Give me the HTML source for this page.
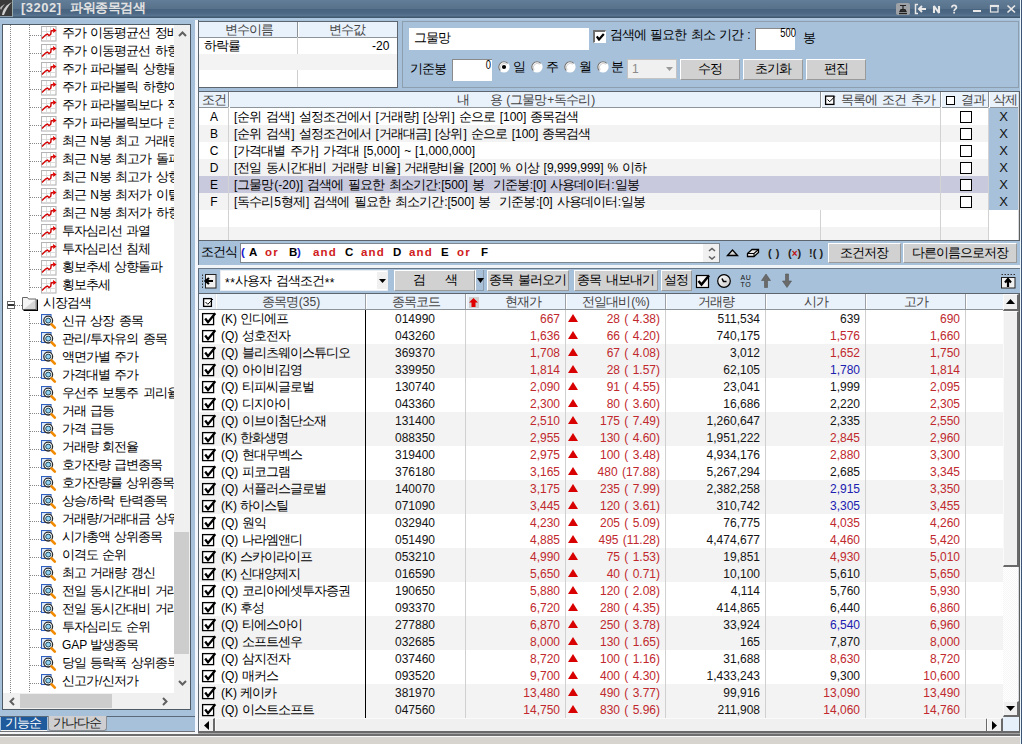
<!DOCTYPE html><html><head><meta charset="utf-8"><style>
*{box-sizing:border-box}
body{margin:0;width:1022px;height:744px;overflow:hidden;position:relative;background:#a7c1da;font-family:"Liberation Sans",sans-serif;font-size:12px;color:#000}
.ab{position:absolute}
.t{position:absolute;white-space:nowrap;line-height:14px}
.k{display:inline-block;font-size:13px;letter-spacing:-1px;margin-right:1px;vertical-align:top;line-height:14px}
</style></head><body>
<div class="ab" style="left:0;top:0;width:1020px;height:18px;background:linear-gradient(#627d97 0px,#57718b 9px,#48637f 9px,#4b6783 13px,#5a7591 16px,#3f5870 17px)"></div>
<div class="ab" style="left:0;top:0;width:13px;height:17px;background:#3a3a3a;border-right:1px solid #9aa;border-bottom:1px solid #8a9aa8"></div>
<svg class="ab" style="left:0;top:0" width="13" height="17"><path d="M2 15 C3 9 6 5 12 2 C8 6 6 10 4 15 Z" fill="#cfcfcf"/><path d="M0 8 C1 6 3 5 5 4 C3 6 2 8 1 10Z" fill="#bbb"/></svg>
<div class="t" style="left:21px;top:1px;font-size:13px;font-weight:bold;color:#e2e2e2;letter-spacing:0.5px">[3202]</div><div class="t" style="left:70px;top:1px;font-size:13px;font-weight:bold;color:#e2e2e2;letter-spacing:-0.5px">파워종목검색</div>
<div class="ab" style="left:896px;top:3px;width:14px;height:12px;background:#9ea2a6;border-radius:2px"></div>
<svg class="ab" style="left:896px;top:3px" width="14" height="12"><path d="M4 2.5h6M7 2.5v4M4 8.5L5 6.5h4L10 8.5Z" stroke="#222" stroke-width="1.2" fill="#333"/><path d="M3 10.5h8" stroke="#222" stroke-width="1.4"/></svg>
<svg class="ab" style="left:914px;top:3px" width="50" height="13"><path d="M4 1.5H1.5v9H4" stroke="#e8e8e8" stroke-width="1.5" fill="none"/><path d="M5 6h7M8 3L5 6L8 9" stroke="#e8e8e8" stroke-width="2" fill="none"/><path d="M20 10V3l5 7V3" stroke="#e8e8e8" stroke-width="2.1" fill="none" stroke-linejoin="bevel"/><path d="M37.8 4.5c0-1.5 1-2.2 2.3-2.2s2.3 0.8 2.3 2.2c0 1.6-2.3 1.8-2.3 3.5M40.1 8.8v1.6" stroke="#e8e8e8" stroke-width="1.7" fill="none"/></svg>
<svg class="ab" style="left:970px;top:3px" width="50" height="13"><path d="M3 8h8" stroke="#e8e8e8" stroke-width="2"/><rect x="20.5" y="2.5" width="7.5" height="6.5" stroke="#e8e8e8" stroke-width="1.2" fill="none"/><path d="M20 3h9" stroke="#e8e8e8" stroke-width="2"/><path d="M37.5 2.5l7.5 7M45 2.5l-7.5 7" stroke="#e8e8e8" stroke-width="1.7"/></svg>
<div class="ab" style="left:0;top:17px;width:1020px;height:1px;background:#41596f"></div>
<div class="ab" style="left:0;top:18px;width:1020px;height:2px;background:#b0c8df"></div>
<div class="ab" style="left:1020px;top:0;width:1px;height:744px;background:#e8f6fb"></div><div class="ab" style="left:1021px;top:0;width:1px;height:744px;background:#3d5474"></div>
<div class="ab" style="left:2px;top:24px;width:189px;height:686px;border:1px solid #4f5b66;background:#fff;overflow:hidden">
<div class="ab" style="left:7px;top:0px;width:1px;height:276px;background:repeating-linear-gradient(#888 0 1px,transparent 1px 2px)"></div>
<div class="ab" style="left:7px;top:285px;width:1px;height:383px;background:repeating-linear-gradient(#888 0 1px,transparent 1px 2px)"></div>
<div class="ab" style="left:26px;top:0px;width:1px;height:268px;background:repeating-linear-gradient(#888 0 1px,transparent 1px 2px)"></div>
<div class="ab" style="left:26px;top:288px;width:1px;height:380px;background:repeating-linear-gradient(#888 0 1px,transparent 1px 2px)"></div>
<div class="ab" style="left:27px;top:10px;width:11px;height:1px;background:repeating-linear-gradient(90deg,#888 0 1px,transparent 1px 2px)"></div>
<svg class="ab" style="left:38px;top:1px" width="16" height="16"><rect x="0.5" y="0.5" width="14.5" height="14.5" fill="#fff" stroke="#b4b4b4" stroke-width="1.1"/><path d="M5.5 1v14M9.5 1v14M1 5.5h14M1 10.5h14" stroke="#d8d8d8" stroke-width="0.9"/><path d="M1 12.5L4.5 9L6.5 8L8 9.5L9.8 8.2L10.2 4.8L12.5 4.5" stroke="#d40000" stroke-width="1.4" fill="none"/><path d="M12 2L15.5 4.5L12.3 7Z" fill="#e00000"/></svg>
<div class="t" style="left:59px;top:1px"><span class="k">주가</span> <span class="k">이동평균선</span> <span class="k">정배열</span></div>
<div class="ab" style="left:27px;top:28px;width:11px;height:1px;background:repeating-linear-gradient(90deg,#888 0 1px,transparent 1px 2px)"></div>
<svg class="ab" style="left:38px;top:19px" width="16" height="16"><rect x="0.5" y="0.5" width="14.5" height="14.5" fill="#fff" stroke="#b4b4b4" stroke-width="1.1"/><path d="M5.5 1v14M9.5 1v14M1 5.5h14M1 10.5h14" stroke="#d8d8d8" stroke-width="0.9"/><path d="M1 12.5L4.5 9L6.5 8L8 9.5L9.8 8.2L10.2 4.8L12.5 4.5" stroke="#d40000" stroke-width="1.4" fill="none"/><path d="M12 2L15.5 4.5L12.3 7Z" fill="#e00000"/></svg>
<div class="t" style="left:59px;top:19px"><span class="k">주가</span> <span class="k">이동평균선</span> <span class="k">하향이탈</span></div>
<div class="ab" style="left:27px;top:46px;width:11px;height:1px;background:repeating-linear-gradient(90deg,#888 0 1px,transparent 1px 2px)"></div>
<svg class="ab" style="left:38px;top:37px" width="16" height="16"><rect x="0.5" y="0.5" width="14.5" height="14.5" fill="#fff" stroke="#b4b4b4" stroke-width="1.1"/><path d="M5.5 1v14M9.5 1v14M1 5.5h14M1 10.5h14" stroke="#d8d8d8" stroke-width="0.9"/><path d="M1 12.5L4.5 9L6.5 8L8 9.5L9.8 8.2L10.2 4.8L12.5 4.5" stroke="#d40000" stroke-width="1.4" fill="none"/><path d="M12 2L15.5 4.5L12.3 7Z" fill="#e00000"/></svg>
<div class="t" style="left:59px;top:37px"><span class="k">주가</span> <span class="k">파라볼릭</span> <span class="k">상향돌파</span></div>
<div class="ab" style="left:27px;top:64px;width:11px;height:1px;background:repeating-linear-gradient(90deg,#888 0 1px,transparent 1px 2px)"></div>
<svg class="ab" style="left:38px;top:55px" width="16" height="16"><rect x="0.5" y="0.5" width="14.5" height="14.5" fill="#fff" stroke="#b4b4b4" stroke-width="1.1"/><path d="M5.5 1v14M9.5 1v14M1 5.5h14M1 10.5h14" stroke="#d8d8d8" stroke-width="0.9"/><path d="M1 12.5L4.5 9L6.5 8L8 9.5L9.8 8.2L10.2 4.8L12.5 4.5" stroke="#d40000" stroke-width="1.4" fill="none"/><path d="M12 2L15.5 4.5L12.3 7Z" fill="#e00000"/></svg>
<div class="t" style="left:59px;top:55px"><span class="k">주가</span> <span class="k">파라볼릭</span> <span class="k">하향이탈</span></div>
<div class="ab" style="left:27px;top:82px;width:11px;height:1px;background:repeating-linear-gradient(90deg,#888 0 1px,transparent 1px 2px)"></div>
<svg class="ab" style="left:38px;top:73px" width="16" height="16"><rect x="0.5" y="0.5" width="14.5" height="14.5" fill="#fff" stroke="#b4b4b4" stroke-width="1.1"/><path d="M5.5 1v14M9.5 1v14M1 5.5h14M1 10.5h14" stroke="#d8d8d8" stroke-width="0.9"/><path d="M1 12.5L4.5 9L6.5 8L8 9.5L9.8 8.2L10.2 4.8L12.5 4.5" stroke="#d40000" stroke-width="1.4" fill="none"/><path d="M12 2L15.5 4.5L12.3 7Z" fill="#e00000"/></svg>
<div class="t" style="left:59px;top:73px"><span class="k">주가</span> <span class="k">파라볼릭보다</span> <span class="k">작은</span></div>
<div class="ab" style="left:27px;top:100px;width:11px;height:1px;background:repeating-linear-gradient(90deg,#888 0 1px,transparent 1px 2px)"></div>
<svg class="ab" style="left:38px;top:91px" width="16" height="16"><rect x="0.5" y="0.5" width="14.5" height="14.5" fill="#fff" stroke="#b4b4b4" stroke-width="1.1"/><path d="M5.5 1v14M9.5 1v14M1 5.5h14M1 10.5h14" stroke="#d8d8d8" stroke-width="0.9"/><path d="M1 12.5L4.5 9L6.5 8L8 9.5L9.8 8.2L10.2 4.8L12.5 4.5" stroke="#d40000" stroke-width="1.4" fill="none"/><path d="M12 2L15.5 4.5L12.3 7Z" fill="#e00000"/></svg>
<div class="t" style="left:59px;top:91px"><span class="k">주가</span> <span class="k">파라볼릭보다</span> <span class="k">큰</span></div>
<div class="ab" style="left:27px;top:118px;width:11px;height:1px;background:repeating-linear-gradient(90deg,#888 0 1px,transparent 1px 2px)"></div>
<svg class="ab" style="left:38px;top:109px" width="16" height="16"><rect x="0.5" y="0.5" width="14.5" height="14.5" fill="#fff" stroke="#b4b4b4" stroke-width="1.1"/><path d="M5.5 1v14M9.5 1v14M1 5.5h14M1 10.5h14" stroke="#d8d8d8" stroke-width="0.9"/><path d="M1 12.5L4.5 9L6.5 8L8 9.5L9.8 8.2L10.2 4.8L12.5 4.5" stroke="#d40000" stroke-width="1.4" fill="none"/><path d="M12 2L15.5 4.5L12.3 7Z" fill="#e00000"/></svg>
<div class="t" style="left:59px;top:109px"><span class="k">최근</span> N<span class="k">봉</span> <span class="k">최고</span> <span class="k">거래량</span></div>
<div class="ab" style="left:27px;top:136px;width:11px;height:1px;background:repeating-linear-gradient(90deg,#888 0 1px,transparent 1px 2px)"></div>
<svg class="ab" style="left:38px;top:127px" width="16" height="16"><rect x="0.5" y="0.5" width="14.5" height="14.5" fill="#fff" stroke="#b4b4b4" stroke-width="1.1"/><path d="M5.5 1v14M9.5 1v14M1 5.5h14M1 10.5h14" stroke="#d8d8d8" stroke-width="0.9"/><path d="M1 12.5L4.5 9L6.5 8L8 9.5L9.8 8.2L10.2 4.8L12.5 4.5" stroke="#d40000" stroke-width="1.4" fill="none"/><path d="M12 2L15.5 4.5L12.3 7Z" fill="#e00000"/></svg>
<div class="t" style="left:59px;top:127px"><span class="k">최근</span> N<span class="k">봉</span> <span class="k">최고가</span> <span class="k">돌파</span></div>
<div class="ab" style="left:27px;top:154px;width:11px;height:1px;background:repeating-linear-gradient(90deg,#888 0 1px,transparent 1px 2px)"></div>
<svg class="ab" style="left:38px;top:145px" width="16" height="16"><rect x="0.5" y="0.5" width="14.5" height="14.5" fill="#fff" stroke="#b4b4b4" stroke-width="1.1"/><path d="M5.5 1v14M9.5 1v14M1 5.5h14M1 10.5h14" stroke="#d8d8d8" stroke-width="0.9"/><path d="M1 12.5L4.5 9L6.5 8L8 9.5L9.8 8.2L10.2 4.8L12.5 4.5" stroke="#d40000" stroke-width="1.4" fill="none"/><path d="M12 2L15.5 4.5L12.3 7Z" fill="#e00000"/></svg>
<div class="t" style="left:59px;top:145px"><span class="k">최근</span> N<span class="k">봉</span> <span class="k">최고가</span> <span class="k">상향</span></div>
<div class="ab" style="left:27px;top:172px;width:11px;height:1px;background:repeating-linear-gradient(90deg,#888 0 1px,transparent 1px 2px)"></div>
<svg class="ab" style="left:38px;top:163px" width="16" height="16"><rect x="0.5" y="0.5" width="14.5" height="14.5" fill="#fff" stroke="#b4b4b4" stroke-width="1.1"/><path d="M5.5 1v14M9.5 1v14M1 5.5h14M1 10.5h14" stroke="#d8d8d8" stroke-width="0.9"/><path d="M1 12.5L4.5 9L6.5 8L8 9.5L9.8 8.2L10.2 4.8L12.5 4.5" stroke="#d40000" stroke-width="1.4" fill="none"/><path d="M12 2L15.5 4.5L12.3 7Z" fill="#e00000"/></svg>
<div class="t" style="left:59px;top:163px"><span class="k">최근</span> N<span class="k">봉</span> <span class="k">최저가</span> <span class="k">이탈</span></div>
<div class="ab" style="left:27px;top:190px;width:11px;height:1px;background:repeating-linear-gradient(90deg,#888 0 1px,transparent 1px 2px)"></div>
<svg class="ab" style="left:38px;top:181px" width="16" height="16"><rect x="0.5" y="0.5" width="14.5" height="14.5" fill="#fff" stroke="#b4b4b4" stroke-width="1.1"/><path d="M5.5 1v14M9.5 1v14M1 5.5h14M1 10.5h14" stroke="#d8d8d8" stroke-width="0.9"/><path d="M1 12.5L4.5 9L6.5 8L8 9.5L9.8 8.2L10.2 4.8L12.5 4.5" stroke="#d40000" stroke-width="1.4" fill="none"/><path d="M12 2L15.5 4.5L12.3 7Z" fill="#e00000"/></svg>
<div class="t" style="left:59px;top:181px"><span class="k">최근</span> N<span class="k">봉</span> <span class="k">최저가</span> <span class="k">하향</span></div>
<div class="ab" style="left:27px;top:208px;width:11px;height:1px;background:repeating-linear-gradient(90deg,#888 0 1px,transparent 1px 2px)"></div>
<svg class="ab" style="left:38px;top:199px" width="16" height="16"><rect x="0.5" y="0.5" width="14.5" height="14.5" fill="#fff" stroke="#b4b4b4" stroke-width="1.1"/><path d="M5.5 1v14M9.5 1v14M1 5.5h14M1 10.5h14" stroke="#d8d8d8" stroke-width="0.9"/><path d="M1 12.5L4.5 9L6.5 8L8 9.5L9.8 8.2L10.2 4.8L12.5 4.5" stroke="#d40000" stroke-width="1.4" fill="none"/><path d="M12 2L15.5 4.5L12.3 7Z" fill="#e00000"/></svg>
<div class="t" style="left:59px;top:199px"><span class="k">투자심리선</span> <span class="k">과열</span></div>
<div class="ab" style="left:27px;top:226px;width:11px;height:1px;background:repeating-linear-gradient(90deg,#888 0 1px,transparent 1px 2px)"></div>
<svg class="ab" style="left:38px;top:217px" width="16" height="16"><rect x="0.5" y="0.5" width="14.5" height="14.5" fill="#fff" stroke="#b4b4b4" stroke-width="1.1"/><path d="M5.5 1v14M9.5 1v14M1 5.5h14M1 10.5h14" stroke="#d8d8d8" stroke-width="0.9"/><path d="M1 12.5L4.5 9L6.5 8L8 9.5L9.8 8.2L10.2 4.8L12.5 4.5" stroke="#d40000" stroke-width="1.4" fill="none"/><path d="M12 2L15.5 4.5L12.3 7Z" fill="#e00000"/></svg>
<div class="t" style="left:59px;top:217px"><span class="k">투자심리선</span> <span class="k">침체</span></div>
<div class="ab" style="left:27px;top:244px;width:11px;height:1px;background:repeating-linear-gradient(90deg,#888 0 1px,transparent 1px 2px)"></div>
<svg class="ab" style="left:38px;top:235px" width="16" height="16"><rect x="0.5" y="0.5" width="14.5" height="14.5" fill="#fff" stroke="#b4b4b4" stroke-width="1.1"/><path d="M5.5 1v14M9.5 1v14M1 5.5h14M1 10.5h14" stroke="#d8d8d8" stroke-width="0.9"/><path d="M1 12.5L4.5 9L6.5 8L8 9.5L9.8 8.2L10.2 4.8L12.5 4.5" stroke="#d40000" stroke-width="1.4" fill="none"/><path d="M12 2L15.5 4.5L12.3 7Z" fill="#e00000"/></svg>
<div class="t" style="left:59px;top:235px"><span class="k">횡보추세</span> <span class="k">상향돌파</span></div>
<div class="ab" style="left:27px;top:262px;width:11px;height:1px;background:repeating-linear-gradient(90deg,#888 0 1px,transparent 1px 2px)"></div>
<svg class="ab" style="left:38px;top:253px" width="16" height="16"><rect x="0.5" y="0.5" width="14.5" height="14.5" fill="#fff" stroke="#b4b4b4" stroke-width="1.1"/><path d="M5.5 1v14M9.5 1v14M1 5.5h14M1 10.5h14" stroke="#d8d8d8" stroke-width="0.9"/><path d="M1 12.5L4.5 9L6.5 8L8 9.5L9.8 8.2L10.2 4.8L12.5 4.5" stroke="#d40000" stroke-width="1.4" fill="none"/><path d="M12 2L15.5 4.5L12.3 7Z" fill="#e00000"/></svg>
<div class="t" style="left:59px;top:253px"><span class="k">횡보추세</span></div>
<div class="ab" style="left:4px;top:276px;width:8px;height:8px;border:1px solid #666;background:#fff"></div>
<div class="ab" style="left:5px;top:279px;width:6px;height:2px;background:#333"></div>
<div class="ab" style="left:12px;top:280px;width:7px;height:1px;background:repeating-linear-gradient(90deg,#888 0 1px,transparent 1px 2px)"></div>
<svg class="ab" style="left:19px;top:270px" width="16" height="16"><path d="M0.5 2.5h5l1 1.5h7.5v10.5h-13.5Z" fill="#f4f4f4" stroke="#666"/><path d="M2 14L13 5v9Z" fill="#d6d6d6"/><path d="M1.5 15.5h14v-11" stroke="#000" stroke-width="1.5" fill="none"/></svg>
<div class="t" style="left:40px;top:271px"><span class="k">시장검색</span></div>
<div class="ab" style="left:27px;top:298px;width:11px;height:1px;background:repeating-linear-gradient(90deg,#888 0 1px,transparent 1px 2px)"></div>
<svg class="ab" style="left:38px;top:289px" width="16" height="16"><rect x="0.5" y="0.5" width="9.5" height="10" fill="#e4f0fc" stroke="#2f5fbf" stroke-width="1.1"/><circle cx="7.2" cy="6.6" r="4.4" fill="#fff" stroke="#2a2a2a" stroke-width="1.3"/><circle cx="7.2" cy="6.6" r="2.5" fill="#92d2f2" stroke="#1d4455" stroke-width="1"/><path d="M10.6 10.4L13.8 13.6" stroke="#f28a00" stroke-width="2.7" stroke-linecap="round"/></svg>
<div class="t" style="left:59px;top:289px"><span class="k">신규</span> <span class="k">상장</span> <span class="k">종목</span></div>
<div class="ab" style="left:27px;top:316px;width:11px;height:1px;background:repeating-linear-gradient(90deg,#888 0 1px,transparent 1px 2px)"></div>
<svg class="ab" style="left:38px;top:307px" width="16" height="16"><rect x="0.5" y="0.5" width="9.5" height="10" fill="#e4f0fc" stroke="#2f5fbf" stroke-width="1.1"/><circle cx="7.2" cy="6.6" r="4.4" fill="#fff" stroke="#2a2a2a" stroke-width="1.3"/><circle cx="7.2" cy="6.6" r="2.5" fill="#92d2f2" stroke="#1d4455" stroke-width="1"/><path d="M10.6 10.4L13.8 13.6" stroke="#f28a00" stroke-width="2.7" stroke-linecap="round"/></svg>
<div class="t" style="left:59px;top:307px"><span class="k">관리</span>/<span class="k">투자유의</span> <span class="k">종목</span></div>
<div class="ab" style="left:27px;top:334px;width:11px;height:1px;background:repeating-linear-gradient(90deg,#888 0 1px,transparent 1px 2px)"></div>
<svg class="ab" style="left:38px;top:325px" width="16" height="16"><rect x="0.5" y="0.5" width="9.5" height="10" fill="#e4f0fc" stroke="#2f5fbf" stroke-width="1.1"/><circle cx="7.2" cy="6.6" r="4.4" fill="#fff" stroke="#2a2a2a" stroke-width="1.3"/><circle cx="7.2" cy="6.6" r="2.5" fill="#92d2f2" stroke="#1d4455" stroke-width="1"/><path d="M10.6 10.4L13.8 13.6" stroke="#f28a00" stroke-width="2.7" stroke-linecap="round"/></svg>
<div class="t" style="left:59px;top:325px"><span class="k">액면가별</span> <span class="k">주가</span></div>
<div class="ab" style="left:27px;top:352px;width:11px;height:1px;background:repeating-linear-gradient(90deg,#888 0 1px,transparent 1px 2px)"></div>
<svg class="ab" style="left:38px;top:343px" width="16" height="16"><rect x="0.5" y="0.5" width="9.5" height="10" fill="#e4f0fc" stroke="#2f5fbf" stroke-width="1.1"/><circle cx="7.2" cy="6.6" r="4.4" fill="#fff" stroke="#2a2a2a" stroke-width="1.3"/><circle cx="7.2" cy="6.6" r="2.5" fill="#92d2f2" stroke="#1d4455" stroke-width="1"/><path d="M10.6 10.4L13.8 13.6" stroke="#f28a00" stroke-width="2.7" stroke-linecap="round"/></svg>
<div class="t" style="left:59px;top:343px"><span class="k">가격대별</span> <span class="k">주가</span></div>
<div class="ab" style="left:27px;top:370px;width:11px;height:1px;background:repeating-linear-gradient(90deg,#888 0 1px,transparent 1px 2px)"></div>
<svg class="ab" style="left:38px;top:361px" width="16" height="16"><rect x="0.5" y="0.5" width="9.5" height="10" fill="#e4f0fc" stroke="#2f5fbf" stroke-width="1.1"/><circle cx="7.2" cy="6.6" r="4.4" fill="#fff" stroke="#2a2a2a" stroke-width="1.3"/><circle cx="7.2" cy="6.6" r="2.5" fill="#92d2f2" stroke="#1d4455" stroke-width="1"/><path d="M10.6 10.4L13.8 13.6" stroke="#f28a00" stroke-width="2.7" stroke-linecap="round"/></svg>
<div class="t" style="left:59px;top:361px"><span class="k">우선주</span> <span class="k">보통주</span> <span class="k">괴리율</span></div>
<div class="ab" style="left:27px;top:388px;width:11px;height:1px;background:repeating-linear-gradient(90deg,#888 0 1px,transparent 1px 2px)"></div>
<svg class="ab" style="left:38px;top:379px" width="16" height="16"><rect x="0.5" y="0.5" width="9.5" height="10" fill="#e4f0fc" stroke="#2f5fbf" stroke-width="1.1"/><circle cx="7.2" cy="6.6" r="4.4" fill="#fff" stroke="#2a2a2a" stroke-width="1.3"/><circle cx="7.2" cy="6.6" r="2.5" fill="#92d2f2" stroke="#1d4455" stroke-width="1"/><path d="M10.6 10.4L13.8 13.6" stroke="#f28a00" stroke-width="2.7" stroke-linecap="round"/></svg>
<div class="t" style="left:59px;top:379px"><span class="k">거래</span> <span class="k">급등</span></div>
<div class="ab" style="left:27px;top:406px;width:11px;height:1px;background:repeating-linear-gradient(90deg,#888 0 1px,transparent 1px 2px)"></div>
<svg class="ab" style="left:38px;top:397px" width="16" height="16"><rect x="0.5" y="0.5" width="9.5" height="10" fill="#e4f0fc" stroke="#2f5fbf" stroke-width="1.1"/><circle cx="7.2" cy="6.6" r="4.4" fill="#fff" stroke="#2a2a2a" stroke-width="1.3"/><circle cx="7.2" cy="6.6" r="2.5" fill="#92d2f2" stroke="#1d4455" stroke-width="1"/><path d="M10.6 10.4L13.8 13.6" stroke="#f28a00" stroke-width="2.7" stroke-linecap="round"/></svg>
<div class="t" style="left:59px;top:397px"><span class="k">가격</span> <span class="k">급등</span></div>
<div class="ab" style="left:27px;top:424px;width:11px;height:1px;background:repeating-linear-gradient(90deg,#888 0 1px,transparent 1px 2px)"></div>
<svg class="ab" style="left:38px;top:415px" width="16" height="16"><rect x="0.5" y="0.5" width="9.5" height="10" fill="#e4f0fc" stroke="#2f5fbf" stroke-width="1.1"/><circle cx="7.2" cy="6.6" r="4.4" fill="#fff" stroke="#2a2a2a" stroke-width="1.3"/><circle cx="7.2" cy="6.6" r="2.5" fill="#92d2f2" stroke="#1d4455" stroke-width="1"/><path d="M10.6 10.4L13.8 13.6" stroke="#f28a00" stroke-width="2.7" stroke-linecap="round"/></svg>
<div class="t" style="left:59px;top:415px"><span class="k">거래량</span> <span class="k">회전율</span></div>
<div class="ab" style="left:27px;top:442px;width:11px;height:1px;background:repeating-linear-gradient(90deg,#888 0 1px,transparent 1px 2px)"></div>
<svg class="ab" style="left:38px;top:433px" width="16" height="16"><rect x="0.5" y="0.5" width="9.5" height="10" fill="#e4f0fc" stroke="#2f5fbf" stroke-width="1.1"/><circle cx="7.2" cy="6.6" r="4.4" fill="#fff" stroke="#2a2a2a" stroke-width="1.3"/><circle cx="7.2" cy="6.6" r="2.5" fill="#92d2f2" stroke="#1d4455" stroke-width="1"/><path d="M10.6 10.4L13.8 13.6" stroke="#f28a00" stroke-width="2.7" stroke-linecap="round"/></svg>
<div class="t" style="left:59px;top:433px"><span class="k">호가잔량</span> <span class="k">급변종목</span></div>
<div class="ab" style="left:27px;top:460px;width:11px;height:1px;background:repeating-linear-gradient(90deg,#888 0 1px,transparent 1px 2px)"></div>
<svg class="ab" style="left:38px;top:451px" width="16" height="16"><rect x="0.5" y="0.5" width="9.5" height="10" fill="#e4f0fc" stroke="#2f5fbf" stroke-width="1.1"/><circle cx="7.2" cy="6.6" r="4.4" fill="#fff" stroke="#2a2a2a" stroke-width="1.3"/><circle cx="7.2" cy="6.6" r="2.5" fill="#92d2f2" stroke="#1d4455" stroke-width="1"/><path d="M10.6 10.4L13.8 13.6" stroke="#f28a00" stroke-width="2.7" stroke-linecap="round"/></svg>
<div class="t" style="left:59px;top:451px"><span class="k">호가잔량률</span> <span class="k">상위종목</span></div>
<div class="ab" style="left:27px;top:478px;width:11px;height:1px;background:repeating-linear-gradient(90deg,#888 0 1px,transparent 1px 2px)"></div>
<svg class="ab" style="left:38px;top:469px" width="16" height="16"><rect x="0.5" y="0.5" width="9.5" height="10" fill="#e4f0fc" stroke="#2f5fbf" stroke-width="1.1"/><circle cx="7.2" cy="6.6" r="4.4" fill="#fff" stroke="#2a2a2a" stroke-width="1.3"/><circle cx="7.2" cy="6.6" r="2.5" fill="#92d2f2" stroke="#1d4455" stroke-width="1"/><path d="M10.6 10.4L13.8 13.6" stroke="#f28a00" stroke-width="2.7" stroke-linecap="round"/></svg>
<div class="t" style="left:59px;top:469px"><span class="k">상승</span>/<span class="k">하락</span> <span class="k">탄력종목</span></div>
<div class="ab" style="left:27px;top:496px;width:11px;height:1px;background:repeating-linear-gradient(90deg,#888 0 1px,transparent 1px 2px)"></div>
<svg class="ab" style="left:38px;top:487px" width="16" height="16"><rect x="0.5" y="0.5" width="9.5" height="10" fill="#e4f0fc" stroke="#2f5fbf" stroke-width="1.1"/><circle cx="7.2" cy="6.6" r="4.4" fill="#fff" stroke="#2a2a2a" stroke-width="1.3"/><circle cx="7.2" cy="6.6" r="2.5" fill="#92d2f2" stroke="#1d4455" stroke-width="1"/><path d="M10.6 10.4L13.8 13.6" stroke="#f28a00" stroke-width="2.7" stroke-linecap="round"/></svg>
<div class="t" style="left:59px;top:487px"><span class="k">거래량</span>/<span class="k">거래대금</span> <span class="k">상위</span></div>
<div class="ab" style="left:27px;top:514px;width:11px;height:1px;background:repeating-linear-gradient(90deg,#888 0 1px,transparent 1px 2px)"></div>
<svg class="ab" style="left:38px;top:505px" width="16" height="16"><rect x="0.5" y="0.5" width="9.5" height="10" fill="#e4f0fc" stroke="#2f5fbf" stroke-width="1.1"/><circle cx="7.2" cy="6.6" r="4.4" fill="#fff" stroke="#2a2a2a" stroke-width="1.3"/><circle cx="7.2" cy="6.6" r="2.5" fill="#92d2f2" stroke="#1d4455" stroke-width="1"/><path d="M10.6 10.4L13.8 13.6" stroke="#f28a00" stroke-width="2.7" stroke-linecap="round"/></svg>
<div class="t" style="left:59px;top:505px"><span class="k">시가총액</span> <span class="k">상위종목</span></div>
<div class="ab" style="left:27px;top:532px;width:11px;height:1px;background:repeating-linear-gradient(90deg,#888 0 1px,transparent 1px 2px)"></div>
<svg class="ab" style="left:38px;top:523px" width="16" height="16"><rect x="0.5" y="0.5" width="9.5" height="10" fill="#e4f0fc" stroke="#2f5fbf" stroke-width="1.1"/><circle cx="7.2" cy="6.6" r="4.4" fill="#fff" stroke="#2a2a2a" stroke-width="1.3"/><circle cx="7.2" cy="6.6" r="2.5" fill="#92d2f2" stroke="#1d4455" stroke-width="1"/><path d="M10.6 10.4L13.8 13.6" stroke="#f28a00" stroke-width="2.7" stroke-linecap="round"/></svg>
<div class="t" style="left:59px;top:523px"><span class="k">이격도</span> <span class="k">순위</span></div>
<div class="ab" style="left:27px;top:550px;width:11px;height:1px;background:repeating-linear-gradient(90deg,#888 0 1px,transparent 1px 2px)"></div>
<svg class="ab" style="left:38px;top:541px" width="16" height="16"><rect x="0.5" y="0.5" width="9.5" height="10" fill="#e4f0fc" stroke="#2f5fbf" stroke-width="1.1"/><circle cx="7.2" cy="6.6" r="4.4" fill="#fff" stroke="#2a2a2a" stroke-width="1.3"/><circle cx="7.2" cy="6.6" r="2.5" fill="#92d2f2" stroke="#1d4455" stroke-width="1"/><path d="M10.6 10.4L13.8 13.6" stroke="#f28a00" stroke-width="2.7" stroke-linecap="round"/></svg>
<div class="t" style="left:59px;top:541px"><span class="k">최고</span> <span class="k">거래량</span> <span class="k">갱신</span></div>
<div class="ab" style="left:27px;top:568px;width:11px;height:1px;background:repeating-linear-gradient(90deg,#888 0 1px,transparent 1px 2px)"></div>
<svg class="ab" style="left:38px;top:559px" width="16" height="16"><rect x="0.5" y="0.5" width="9.5" height="10" fill="#e4f0fc" stroke="#2f5fbf" stroke-width="1.1"/><circle cx="7.2" cy="6.6" r="4.4" fill="#fff" stroke="#2a2a2a" stroke-width="1.3"/><circle cx="7.2" cy="6.6" r="2.5" fill="#92d2f2" stroke="#1d4455" stroke-width="1"/><path d="M10.6 10.4L13.8 13.6" stroke="#f28a00" stroke-width="2.7" stroke-linecap="round"/></svg>
<div class="t" style="left:59px;top:559px"><span class="k">전일</span> <span class="k">동시간대비</span> <span class="k">거래량</span></div>
<div class="ab" style="left:27px;top:586px;width:11px;height:1px;background:repeating-linear-gradient(90deg,#888 0 1px,transparent 1px 2px)"></div>
<svg class="ab" style="left:38px;top:577px" width="16" height="16"><rect x="0.5" y="0.5" width="9.5" height="10" fill="#e4f0fc" stroke="#2f5fbf" stroke-width="1.1"/><circle cx="7.2" cy="6.6" r="4.4" fill="#fff" stroke="#2a2a2a" stroke-width="1.3"/><circle cx="7.2" cy="6.6" r="2.5" fill="#92d2f2" stroke="#1d4455" stroke-width="1"/><path d="M10.6 10.4L13.8 13.6" stroke="#f28a00" stroke-width="2.7" stroke-linecap="round"/></svg>
<div class="t" style="left:59px;top:577px"><span class="k">전일</span> <span class="k">동시간대비</span> <span class="k">거래대금</span></div>
<div class="ab" style="left:27px;top:604px;width:11px;height:1px;background:repeating-linear-gradient(90deg,#888 0 1px,transparent 1px 2px)"></div>
<svg class="ab" style="left:38px;top:595px" width="16" height="16"><rect x="0.5" y="0.5" width="9.5" height="10" fill="#e4f0fc" stroke="#2f5fbf" stroke-width="1.1"/><circle cx="7.2" cy="6.6" r="4.4" fill="#fff" stroke="#2a2a2a" stroke-width="1.3"/><circle cx="7.2" cy="6.6" r="2.5" fill="#92d2f2" stroke="#1d4455" stroke-width="1"/><path d="M10.6 10.4L13.8 13.6" stroke="#f28a00" stroke-width="2.7" stroke-linecap="round"/></svg>
<div class="t" style="left:59px;top:595px"><span class="k">투자심리도</span> <span class="k">순위</span></div>
<div class="ab" style="left:27px;top:622px;width:11px;height:1px;background:repeating-linear-gradient(90deg,#888 0 1px,transparent 1px 2px)"></div>
<svg class="ab" style="left:38px;top:613px" width="16" height="16"><rect x="0.5" y="0.5" width="9.5" height="10" fill="#e4f0fc" stroke="#2f5fbf" stroke-width="1.1"/><circle cx="7.2" cy="6.6" r="4.4" fill="#fff" stroke="#2a2a2a" stroke-width="1.3"/><circle cx="7.2" cy="6.6" r="2.5" fill="#92d2f2" stroke="#1d4455" stroke-width="1"/><path d="M10.6 10.4L13.8 13.6" stroke="#f28a00" stroke-width="2.7" stroke-linecap="round"/></svg>
<div class="t" style="left:59px;top:613px">GAP <span class="k">발생종목</span></div>
<div class="ab" style="left:27px;top:640px;width:11px;height:1px;background:repeating-linear-gradient(90deg,#888 0 1px,transparent 1px 2px)"></div>
<svg class="ab" style="left:38px;top:631px" width="16" height="16"><rect x="0.5" y="0.5" width="9.5" height="10" fill="#e4f0fc" stroke="#2f5fbf" stroke-width="1.1"/><circle cx="7.2" cy="6.6" r="4.4" fill="#fff" stroke="#2a2a2a" stroke-width="1.3"/><circle cx="7.2" cy="6.6" r="2.5" fill="#92d2f2" stroke="#1d4455" stroke-width="1"/><path d="M10.6 10.4L13.8 13.6" stroke="#f28a00" stroke-width="2.7" stroke-linecap="round"/></svg>
<div class="t" style="left:59px;top:631px"><span class="k">당일</span> <span class="k">등락폭</span> <span class="k">상위종목</span></div>
<div class="ab" style="left:27px;top:658px;width:11px;height:1px;background:repeating-linear-gradient(90deg,#888 0 1px,transparent 1px 2px)"></div>
<svg class="ab" style="left:38px;top:649px" width="16" height="16"><rect x="0.5" y="0.5" width="9.5" height="10" fill="#e4f0fc" stroke="#2f5fbf" stroke-width="1.1"/><circle cx="7.2" cy="6.6" r="4.4" fill="#fff" stroke="#2a2a2a" stroke-width="1.3"/><circle cx="7.2" cy="6.6" r="2.5" fill="#92d2f2" stroke="#1d4455" stroke-width="1"/><path d="M10.6 10.4L13.8 13.6" stroke="#f28a00" stroke-width="2.7" stroke-linecap="round"/></svg>
<div class="t" style="left:59px;top:649px"><span class="k">신고가</span>/<span class="k">신저가</span></div>
<div class="ab" style="left:171px;top:0;width:17px;height:668px;background:#f0f0f0"></div>
<svg class="ab" style="left:175px;top:5px" width="9" height="7"><path d="M1 6L4.5 2.5L8 6" stroke="#606060" stroke-width="2" fill="none"/></svg>
<div class="ab" style="left:171px;top:507px;width:15px;height:122px;background:#cdcdcd"></div>
<svg class="ab" style="left:175px;top:655px" width="9" height="7"><path d="M1 1L4.5 4.5L8 1" stroke="#606060" stroke-width="2" fill="none"/></svg>
<div class="ab" style="left:0;top:668px;width:188px;height:16px;background:#f0f0f0"></div>
<div class="ab" style="left:17px;top:669px;width:92px;height:14px;background:#cdcdcd"></div>
<svg class="ab" style="left:5px;top:672px" width="7" height="9"><path d="M6 1L2.5 4.5L6 8" stroke="#606060" stroke-width="2" fill="none"/></svg>
<svg class="ab" style="left:159px;top:672px" width="7" height="9"><path d="M1 1L4.5 4.5L1 8" stroke="#606060" stroke-width="2" fill="none"/></svg>
</div>
<div class="ab" style="left:0;top:716px;width:196px;height:1px;background:#5a6a7a"></div>
<div class="ab" style="left:1px;top:717px;width:46px;height:14px;background:#1f5b9c;border-bottom:1px solid #f4f4f4"></div>
<div class="ab" style="left:0;top:731px;width:196px;height:1px;background:#6f7378"></div>
<div class="ab" style="left:0;top:732px;width:196px;height:2px;background:#f2f4f6"></div>
<div class="t" style="left:5px;top:716px;color:#fff;font-size:12px;letter-spacing:0.5px"><span class="k">기능순</span></div>
<div class="ab" style="left:48px;top:716px;width:59px;height:15px;background:#cfcfd2;border:1px solid #8a8f96;border-top:none;border-radius:0 0 3px 3px"></div>
<div class="t" style="left:53px;top:716px;color:#222;letter-spacing:0.5px"><span class="k">가나다순</span></div>
<div class="ab" style="left:195px;top:20px;width:3px;height:714px;background:#f4f8fc"></div>
<div class="ab" style="left:198px;top:20px;width:1px;height:714px;background:#5b6b7b"></div>
<div class="ab" style="left:198px;top:21px;width:200px;height:67px;border:1px solid #5d666e;background:#fff"></div>
<div class="ab" style="left:199px;top:22px;width:198px;height:15px;background:#e9f1fb"></div>
<div class="ab" style="left:199px;top:37px;width:198px;height:1px;background:#8d949a"></div>
<div class="ab" style="left:297px;top:22px;width:1px;height:65px;background:#cfcfcf"></div>
<div class="ab" style="left:297px;top:22px;width:1px;height:15px;background:#8a9298"></div><div class="ab" style="left:298px;top:22px;width:1px;height:15px;background:#fff"></div>
<div class="ab" style="left:199px;top:54px;width:198px;height:16px;background:#f3f3f3"></div>
<div class="t" style="left:225px;top:23px;color:#444"><span class="k">변수이름</span></div>
<div class="t" style="left:329px;top:23px;color:#444"><span class="k">변수값</span></div>
<div class="t" style="left:204px;top:39px"><span class="k">하락률</span></div>
<div class="t" style="left:372px;top:39px">-20</div>
<div class="ab" style="left:402px;top:21px;width:617px;height:67px;border:1px solid #8d9eae"></div>
<div class="ab" style="left:409px;top:28px;width:180px;height:22px;background:#fff"></div>
<div class="t" style="left:414px;top:31px"><span class="k">그물망</span></div>
<div class="ab" style="left:593px;top:30px;width:13px;height:13px;background:#fff;border-top:2px solid #6e6e6e;border-left:2px solid #6e6e6e;border-right:1px solid #fff;border-bottom:1px solid #fff"></div>
<svg class="ab" style="left:596px;top:33px" width="9" height="8"><path d="M0.8 3.5L3 6.5L7.8 1" stroke="#000" stroke-width="2.2" fill="none"/></svg>
<div class="t" style="left:610px;top:28px"><span class="k">검색에</span> <span class="k">필요한</span> <span class="k">최소</span> <span class="k">기간</span> :</div>
<div class="ab" style="left:755px;top:28px;width:40px;height:22px;background:#fff"></div>
<div class="ab" style="left:755px;top:28px;width:40px;height:22px;border-top:1px solid #8a8a8a;border-left:1px solid #8a8a8a"></div>
<div class="t" style="left:760px;top:26px;width:36px;text-align:right;font-size:13px;transform:scaleX(0.72);transform-origin:right">500</div>
<div class="t" style="left:803px;top:31px"><span class="k">봉</span></div>
<div class="t" style="left:410px;top:62px"><span class="k">기준봉</span></div>
<div class="ab" style="left:452px;top:59px;width:40px;height:22px;background:#fff"></div>
<div class="ab" style="left:452px;top:59px;width:40px;height:22px;border-top:1px solid #8a8a8a;border-left:1px solid #8a8a8a"></div>
<div class="t" style="left:450px;top:58px;width:41px;text-align:right;font-size:13px;transform:scaleX(0.72);transform-origin:right">0</div>
<svg class="ab" style="left:498px;top:61px" width="12" height="12"><circle cx="6" cy="6" r="5.6" fill="#fff"/><path d="M2.3 9.7A5.2 5.2 0 0 1 9.7 2.3" stroke="#707070" stroke-width="1.2" fill="none"/><path d="M3.2 8.8A4 4 0 0 1 8.8 3.2" stroke="#c8c8c8" stroke-width="0.9" fill="none"/><circle cx="6" cy="6" r="2.1" fill="#000"/></svg>
<div class="t" style="left:513px;top:60px"><span class="k">일</span></div>
<svg class="ab" style="left:531px;top:61px" width="12" height="12"><circle cx="6" cy="6" r="5.6" fill="#fff"/><path d="M2.3 9.7A5.2 5.2 0 0 1 9.7 2.3" stroke="#707070" stroke-width="1.2" fill="none"/><path d="M3.2 8.8A4 4 0 0 1 8.8 3.2" stroke="#c8c8c8" stroke-width="0.9" fill="none"/></svg>
<div class="t" style="left:546px;top:60px"><span class="k">주</span></div>
<svg class="ab" style="left:564px;top:61px" width="12" height="12"><circle cx="6" cy="6" r="5.6" fill="#fff"/><path d="M2.3 9.7A5.2 5.2 0 0 1 9.7 2.3" stroke="#707070" stroke-width="1.2" fill="none"/><path d="M3.2 8.8A4 4 0 0 1 8.8 3.2" stroke="#c8c8c8" stroke-width="0.9" fill="none"/></svg>
<div class="t" style="left:579px;top:60px"><span class="k">월</span></div>
<svg class="ab" style="left:597px;top:61px" width="12" height="12"><circle cx="6" cy="6" r="5.6" fill="#fff"/><path d="M2.3 9.7A5.2 5.2 0 0 1 9.7 2.3" stroke="#707070" stroke-width="1.2" fill="none"/><path d="M3.2 8.8A4 4 0 0 1 8.8 3.2" stroke="#c8c8c8" stroke-width="0.9" fill="none"/></svg>
<div class="t" style="left:611px;top:60px"><span class="k">분</span></div>
<div class="ab" style="left:627px;top:59px;width:50px;height:20px;background:#f0f0f0;border:1px solid #c3c3c3"></div>
<div class="t" style="left:632px;top:62px;color:#8a8a8a">1</div>
<svg class="ab" style="left:666px;top:67px" width="7" height="4"><path d="M0 0h7L3.5 4Z" fill="#9a9a9a"/></svg>
<div class="ab" style="left:680px;top:59px;width:60px;height:21px;background:#d1d1d1;border-top:1px solid #fff;border-left:1px solid #fff;border-right:1px solid #9a9a9a;border-bottom:1px solid #9a9a9a"></div>
<div class="t" style="left:680px;top:62px;width:60px;text-align:center;"><span class="k">수정</span></div>
<div class="ab" style="left:743px;top:59px;width:60px;height:21px;background:#d1d1d1;border-top:1px solid #fff;border-left:1px solid #fff;border-right:1px solid #9a9a9a;border-bottom:1px solid #9a9a9a"></div>
<div class="t" style="left:743px;top:62px;width:60px;text-align:center;"><span class="k">초기화</span></div>
<div class="ab" style="left:806px;top:59px;width:60px;height:21px;background:#d1d1d1;border-top:1px solid #fff;border-left:1px solid #fff;border-right:1px solid #9a9a9a;border-bottom:1px solid #9a9a9a"></div>
<div class="t" style="left:806px;top:62px;width:60px;text-align:center;"><span class="k">편집</span></div>
<div class="ab" style="left:198px;top:91px;width:822px;height:150px;border:1px solid #5d666e;border-right:1px solid #5e5e5e;background:#fff;box-shadow:inset -1px 0 0 #d6dade"></div>
<div class="ab" style="left:199px;top:92px;width:819px;height:15px;background:#e9f1fb"></div>
<div class="ab" style="left:199px;top:107px;width:819px;height:1px;background:#8d949a"></div>
<div class="ab" style="left:228px;top:92px;width:1px;height:148px;background:#d2d2d2"></div>
<div class="ab" style="left:228px;top:92px;width:1px;height:15px;background:#8a9298"></div>
<div class="ab" style="left:229px;top:92px;width:1px;height:16px;background:#fff"></div>
<div class="ab" style="left:820px;top:210px;width:1px;height:30px;background:#d2d2d2"></div>
<div class="ab" style="left:820px;top:92px;width:1px;height:15px;background:#8a9298"></div>
<div class="ab" style="left:821px;top:92px;width:1px;height:16px;background:#fff"></div>
<div class="ab" style="left:940px;top:92px;width:1px;height:148px;background:#d2d2d2"></div>
<div class="ab" style="left:940px;top:92px;width:1px;height:15px;background:#8a9298"></div>
<div class="ab" style="left:941px;top:92px;width:1px;height:16px;background:#fff"></div>
<div class="ab" style="left:988px;top:92px;width:1px;height:148px;background:#d2d2d2"></div>
<div class="ab" style="left:988px;top:92px;width:1px;height:15px;background:#8a9298"></div>
<div class="ab" style="left:989px;top:92px;width:1px;height:16px;background:#fff"></div>
<div class="t" style="left:199px;top:110px;width:30px;text-align:center">A</div>
<div class="t" style="left:234px;top:110px;word-spacing:0.6px">[<span class="k">순위</span> <span class="k">검색</span>] <span class="k">설정조건에서</span> [<span class="k">거래량</span>] [<span class="k">상위</span>] <span class="k">순으로</span> [100] <span class="k">종목검색</span></div>
<div class="ab" style="left:989px;top:108px;width:29px;height:17px;background:#a7c1da"></div>
<div class="ab" style="left:960px;top:111px;width:12px;height:12px;border:1.5px solid #000;background:#fff"></div>
<div class="t" style="left:989px;top:110px;width:29px;text-align:center;font-size:13px;color:#111">X</div>
<div class="ab" style="left:199px;top:125px;width:790px;height:17px;background:#f3f3f3"></div>
<div class="t" style="left:199px;top:127px;width:30px;text-align:center">B</div>
<div class="t" style="left:234px;top:127px;word-spacing:0.6px">[<span class="k">순위</span> <span class="k">검색</span>] <span class="k">설정조건에서</span> [<span class="k">거래대금</span>] [<span class="k">상위</span>] <span class="k">순으로</span> [100] <span class="k">종목검색</span></div>
<div class="ab" style="left:989px;top:125px;width:29px;height:17px;background:#a7c1da"></div>
<div class="ab" style="left:960px;top:128px;width:12px;height:12px;border:1.5px solid #000;background:#fff"></div>
<div class="t" style="left:989px;top:127px;width:29px;text-align:center;font-size:13px;color:#111">X</div>
<div class="t" style="left:199px;top:144px;width:30px;text-align:center">C</div>
<div class="t" style="left:234px;top:144px;word-spacing:0.6px">[<span class="k">가격대별</span> <span class="k">주가</span>] <span class="k">가격대</span> [5,000] ~ [1,000,000]</div>
<div class="ab" style="left:989px;top:142px;width:29px;height:17px;background:#a7c1da"></div>
<div class="ab" style="left:960px;top:145px;width:12px;height:12px;border:1.5px solid #000;background:#fff"></div>
<div class="t" style="left:989px;top:144px;width:29px;text-align:center;font-size:13px;color:#111">X</div>
<div class="ab" style="left:199px;top:159px;width:790px;height:17px;background:#f3f3f3"></div>
<div class="t" style="left:199px;top:161px;width:30px;text-align:center">D</div>
<div class="t" style="left:234px;top:161px;word-spacing:0.6px">[<span class="k">전일</span> <span class="k">동시간대비</span> <span class="k">거래량</span> <span class="k">비율</span>] <span class="k">거래량비율</span> [200] % <span class="k">이상</span> [9,999,999] % <span class="k">이하</span></div>
<div class="ab" style="left:989px;top:159px;width:29px;height:17px;background:#a7c1da"></div>
<div class="ab" style="left:960px;top:162px;width:12px;height:12px;border:1.5px solid #000;background:#fff"></div>
<div class="t" style="left:989px;top:161px;width:29px;text-align:center;font-size:13px;color:#111">X</div>
<div class="ab" style="left:199px;top:176px;width:790px;height:17px;background:#c9c9dd"></div>
<div class="t" style="left:199px;top:178px;width:30px;text-align:center">E</div>
<div class="t" style="left:234px;top:178px;word-spacing:0.6px">[<span class="k">그물망</span>(-20)] <span class="k">검색에</span> <span class="k">필요한</span> <span class="k">최소기간</span>:[500] <span class="k">봉</span>&nbsp; <span class="k">기준봉</span>:[0] <span class="k">사용데이터</span>:<span class="k">일봉</span></div>
<div class="ab" style="left:989px;top:176px;width:29px;height:17px;background:#a7c1da"></div>
<div class="ab" style="left:960px;top:179px;width:12px;height:12px;border:1.5px solid #000;background:#fff"></div>
<div class="t" style="left:989px;top:178px;width:29px;text-align:center;font-size:13px;color:#111">X</div>
<div class="ab" style="left:199px;top:193px;width:790px;height:17px;background:#f3f3f3"></div>
<div class="t" style="left:199px;top:195px;width:30px;text-align:center">F</div>
<div class="t" style="left:234px;top:195px;word-spacing:0.6px">[<span class="k">독수리</span>5<span class="k">형제</span>] <span class="k">검색에</span> <span class="k">필요한</span> <span class="k">최소기간</span>:[500] <span class="k">봉</span>&nbsp; <span class="k">기준봉</span>:[0] <span class="k">사용데이터</span>:<span class="k">일봉</span></div>
<div class="ab" style="left:989px;top:193px;width:29px;height:17px;background:#a7c1da"></div>
<div class="ab" style="left:960px;top:196px;width:12px;height:12px;border:1.5px solid #000;background:#fff"></div>
<div class="t" style="left:989px;top:195px;width:29px;text-align:center;font-size:13px;color:#111">X</div>
<div class="ab" style="left:199px;top:227px;width:790px;height:13px;background:#f3f3f3"></div>
<div class="ab" style="left:228px;top:108px;width:1px;height:132px;background:#d2d2d2"></div>
<div class="ab" style="left:820px;top:210px;width:1px;height:30px;background:#d2d2d2"></div>
<div class="ab" style="left:940px;top:108px;width:1px;height:132px;background:#d2d2d2"></div>
<div class="ab" style="left:988px;top:108px;width:1px;height:132px;background:#d2d2d2"></div>
<div class="t" style="left:200px;top:93px;width:29px;text-align:center;color:#444"><span class="k">조건</span></div>
<div class="t" style="left:457px;top:93px;color:#444"><span class="k">내</span></div><div class="t" style="left:490px;top:93px;color:#444"><span class="k">용</span> (<span class="k">그물망</span>+<span class="k">독수리</span>)</div>
<svg class="ab" style="left:824px;top:94px" width="14" height="12"><rect x="1.6" y="2.1" width="8.3" height="8.3" fill="#fff" stroke="#000" stroke-width="1.3"/><path d="M3.6 5.5L5.7 7.7L10.8 2.5" stroke="#000" stroke-width="1" fill="none"/></svg>
<div class="t" style="left:841px;top:93px;color:#444;letter-spacing:0.6px"><span class="k">목록에</span> <span class="k">조건</span> <span class="k">추가</span></div>
<div class="ab" style="left:946px;top:96px;width:9px;height:9px;border:1.3px solid #000;background:#fff"></div>
<div class="t" style="left:961px;top:93px;color:#444;letter-spacing:0.6px"><span class="k">결과</span></div>
<div class="t" style="left:993px;top:93px;color:#444"><span class="k">삭제</span></div>
<div class="t" style="left:201px;top:245px"><span class="k">조건식</span></div>
<div class="ab" style="left:240px;top:243px;width:480px;height:20px;background:#fff;border:1px solid #7d8790"></div>
<div class="ab" style="left:703px;top:244px;width:16px;height:18px;background:#f0f0f0"></div>
<svg class="ab" style="left:708px;top:247px" width="8" height="14"><path d="M1 4L4 1.5L7 4M1 9.5L4 12L7 9.5" stroke="#606060" stroke-width="1.6" fill="none"/></svg>
<div class="t" style="left:241px;top:245px;font-weight:bold;font-size:11.5px;letter-spacing:1.2px;color:#1a1acc">(</div>
<div class="t" style="left:249px;top:245px;font-weight:bold;font-size:11.5px;letter-spacing:1.2px;color:#000">A</div>
<div class="t" style="left:265px;top:245px;font-weight:bold;font-size:11.5px;letter-spacing:1.2px;color:#d02020">or</div>
<div class="t" style="left:289px;top:245px;font-weight:bold;font-size:11.5px;letter-spacing:1.2px;color:#000">B</div>
<div class="t" style="left:297px;top:245px;font-weight:bold;font-size:11.5px;letter-spacing:1.2px;color:#1a1acc">)</div>
<div class="t" style="left:313px;top:245px;font-weight:bold;font-size:11.5px;letter-spacing:1.2px;color:#d02020">and</div>
<div class="t" style="left:345px;top:245px;font-weight:bold;font-size:11.5px;letter-spacing:1.2px;color:#000">C</div>
<div class="t" style="left:361px;top:245px;font-weight:bold;font-size:11.5px;letter-spacing:1.2px;color:#d02020">and</div>
<div class="t" style="left:393px;top:245px;font-weight:bold;font-size:11.5px;letter-spacing:1.2px;color:#000">D</div>
<div class="t" style="left:409px;top:245px;font-weight:bold;font-size:11.5px;letter-spacing:1.2px;color:#d02020">and</div>
<div class="t" style="left:441px;top:245px;font-weight:bold;font-size:11.5px;letter-spacing:1.2px;color:#000">E</div>
<div class="t" style="left:457px;top:245px;font-weight:bold;font-size:11.5px;letter-spacing:1.2px;color:#d02020">or</div>
<div class="t" style="left:481px;top:245px;font-weight:bold;font-size:11.5px;letter-spacing:1.2px;color:#000">F</div>
<svg class="ab" style="left:726px;top:247px" width="100" height="12"><defs><linearGradient id="tg" x1="0" y1="0" x2="0" y2="1"><stop offset="0" stop-color="#fff"/><stop offset="1" stop-color="#bbb"/></linearGradient></defs><path d="M1.5 8.5L6.5 3L11.5 8.5Z" fill="url(#tg)" stroke="#000" stroke-width="1.3"/><path d="M21.5 6.5L26 2.5h6.5v3L28 9.5h-6.5Z" fill="#eee" stroke="#000" stroke-width="1.3"/><path d="M21.5 6.5h6.5l4.5-4M28 6.5v3" stroke="#000" stroke-width="1.1" fill="none"/></svg>
<div class="t" style="left:768px;top:246px;font-weight:bold;font-size:11px;color:#222;letter-spacing:0.5px">( )</div>
<div class="t" style="left:788px;top:246px;font-weight:bold;font-size:11px;color:#222">(<span style="color:#c01010;font-size:10px">×</span>)</div>
<div class="t" style="left:809px;top:246px;font-weight:bold;font-size:11px;color:#222">!( )</div>
<div class="ab" style="left:828px;top:243px;width:73px;height:20px;background:#d1d1d1;border-top:1px solid #fff;border-left:1px solid #fff;border-right:1px solid #9a9a9a;border-bottom:1px solid #9a9a9a"></div>
<div class="t" style="left:828px;top:246px;width:73px;text-align:center;"><span class="k">조건저장</span></div>
<div class="ab" style="left:903px;top:243px;width:114px;height:20px;background:#d1d1d1;border-top:1px solid #fff;border-left:1px solid #fff;border-right:1px solid #9a9a9a;border-bottom:1px solid #9a9a9a"></div>
<div class="t" style="left:903px;top:246px;width:114px;text-align:center;"><span class="k">다른이름으로저장</span></div>
<div class="ab" style="left:198px;top:265px;width:822px;height:3px;background:#f2f5f8"></div>
<div class="ab" style="left:198px;top:268px;width:822px;height:1px;background:#6a7a8a"></div>
<svg class="ab" style="left:202px;top:274px" width="15" height="15"><path d="M0.5 0.5v14" stroke="#333" stroke-dasharray="1.5 1.5"/><rect x="3.5" y="0.5" width="10.5" height="13.5" fill="#f0f0f0" stroke="#222"/><path d="M11 7H4M7 4L3.5 7L7 10" stroke="#000" stroke-width="2.2" fill="none"/></svg>
<div class="ab" style="left:220px;top:270px;width:168px;height:21px;background:#fff;border:1px solid #e8eef4"></div>
<div class="ab" style="left:377px;top:272px;width:11px;height:17px;background:#f0f0f0"></div>
<div class="t" style="left:225px;top:274px"><span style="position:relative;top:2px;letter-spacing:0.5px">**</span><span class="k">사용자</span> <span class="k">검색조건</span><span style="position:relative;top:2px;letter-spacing:0.5px">**</span></div>
<svg class="ab" style="left:379px;top:279px" width="7" height="4"><path d="M0 0h7L3.5 4Z" fill="#000"/></svg>
<div class="ab" style="left:394px;top:270px;width:81px;height:21px;background:#d1d1d1;border-top:1px solid #fff;border-left:1px solid #fff;border-right:1px solid #9a9a9a;border-bottom:1px solid #9a9a9a"></div>
<div class="t" style="left:394px;top:273px;width:81px;text-align:center;"></div>
<div class="t" style="left:413px;top:273px"><span class="k">검</span></div><div class="t" style="left:445px;top:273px"><span class="k">색</span></div>
<div class="ab" style="left:475px;top:270px;width:9px;height:21px;background:#a9c2da;border-left:1px solid #fff;border-right:1px solid #8a9aaa;border-bottom:1px solid #8a9aaa"></div>
<svg class="ab" style="left:477px;top:278px" width="7" height="5"><path d="M0 0h7L3.5 5Z" fill="#000"/></svg>
<div class="ab" style="left:487px;top:270px;width:82px;height:21px;background:#d1d1d1;border-top:1px solid #fff;border-left:1px solid #fff;border-right:1px solid #9a9a9a;border-bottom:1px solid #9a9a9a"></div>
<div class="t" style="left:487px;top:273px;width:82px;text-align:center;"><span class="k">종목</span> <span class="k">불러오기</span></div>
<div class="ab" style="left:574px;top:270px;width:84px;height:21px;background:#d1d1d1;border-top:1px solid #fff;border-left:1px solid #fff;border-right:1px solid #9a9a9a;border-bottom:1px solid #9a9a9a"></div>
<div class="t" style="left:574px;top:273px;width:84px;text-align:center;"><span class="k">종목</span> <span class="k">내보내기</span></div>
<div class="ab" style="left:661px;top:270px;width:31px;height:21px;background:#d1d1d1;border-top:1px solid #fff;border-left:1px solid #fff;border-right:1px solid #9a9a9a;border-bottom:1px solid #9a9a9a"></div>
<div class="t" style="left:661px;top:273px;width:31px;text-align:center;"><span class="k">설정</span></div>
<svg class="ab" style="left:695px;top:273px" width="110" height="16"><rect x="1.5" y="2.5" width="12" height="12" fill="#f4f4f4" stroke="#000" stroke-width="1.2"/><path d="M3.5 8L6.5 11.5L14 2.5" stroke="#000" stroke-width="2.5" fill="none"/><defs><linearGradient id="cg" x1="0" y1="0" x2="1" y2="1"><stop offset="0" stop-color="#fff"/><stop offset="1" stop-color="#c8c8c8"/></linearGradient></defs><circle cx="29" cy="8" r="6.3" fill="url(#cg)" stroke="#000" stroke-width="1.2"/><path d="M27 5.5L28.5 8.5h3" stroke="#000" stroke-width="1.6" fill="none"/><text x="45.5" y="7" font-size="7" font-family="Liberation Sans" fill="#111" letter-spacing="0.6">AU</text><text x="45.5" y="14" font-size="7" font-family="Liberation Sans" fill="#111" letter-spacing="0.6">TO</text><path d="M71 1L75.5 7.5H72.5V14.5H69.5V7.5H66.5Z" fill="#6a6a6a" stroke="#555" stroke-width="0.6"/><path d="M92 14.5L96.5 8H93.5V1H90.5V8H87.5Z" fill="#6a6a6a" stroke="#555" stroke-width="0.6"/></svg>
<svg class="ab" style="left:1001px;top:274px" width="15" height="15"><path d="M0.5 0.5h14" stroke="#333" stroke-dasharray="1.5 1.5"/><rect x="0.5" y="3.5" width="13.5" height="10.5" fill="#f0f0f0" stroke="#222"/><path d="M7 13V6M4 8.5L7 5L10 8.5" stroke="#000" stroke-width="2.2" fill="none"/></svg>
<div class="ab" style="left:198px;top:293px;width:822px;height:441px;border:1px solid #5d666e;border-right:1px solid #5e5e5e;border-bottom:none;background:#fff;box-shadow:inset -1px 0 0 #d6dade"></div>
<div class="ab" style="left:199px;top:294px;width:804px;height:15px;background:#e9f1fb"></div>
<div class="ab" style="left:199px;top:309px;width:804px;height:1px;background:#8d949a"></div>
<div class="ab" style="left:199px;top:344px;width:804px;height:17px;background:#f3f3f3"></div>
<div class="ab" style="left:199px;top:361px;width:804px;height:17px;background:#f3f3f3"></div>
<div class="ab" style="left:199px;top:412px;width:804px;height:17px;background:#f3f3f3"></div>
<div class="ab" style="left:199px;top:429px;width:804px;height:17px;background:#f3f3f3"></div>
<div class="ab" style="left:199px;top:480px;width:804px;height:17px;background:#f3f3f3"></div>
<div class="ab" style="left:199px;top:497px;width:804px;height:17px;background:#f3f3f3"></div>
<div class="ab" style="left:199px;top:548px;width:804px;height:17px;background:#f3f3f3"></div>
<div class="ab" style="left:199px;top:565px;width:804px;height:17px;background:#f3f3f3"></div>
<div class="ab" style="left:199px;top:616px;width:804px;height:17px;background:#f3f3f3"></div>
<div class="ab" style="left:199px;top:633px;width:804px;height:17px;background:#f3f3f3"></div>
<div class="ab" style="left:199px;top:684px;width:804px;height:17px;background:#f3f3f3"></div>
<div class="ab" style="left:199px;top:701px;width:804px;height:17px;background:#f3f3f3"></div>
<div class="ab" style="left:365px;top:310px;width:1px;height:408px;background:#000"></div>
<div class="ab" style="left:465px;top:310px;width:1px;height:408px;background:#d0d0d0"></div>
<div class="ab" style="left:565px;top:310px;width:1px;height:408px;background:#d0d0d0"></div>
<div class="ab" style="left:665px;top:310px;width:1px;height:408px;background:#d0d0d0"></div>
<div class="ab" style="left:765px;top:310px;width:1px;height:408px;background:#d0d0d0"></div>
<div class="ab" style="left:865px;top:310px;width:1px;height:408px;background:#d0d0d0"></div>
<div class="ab" style="left:965px;top:310px;width:1px;height:408px;background:#d0d0d0"></div>
<div class="ab" style="left:215px;top:294px;width:1px;height:15px;background:#e4e8ec"></div>
<div class="ab" style="left:216px;top:294px;width:1px;height:15px;background:#fff"></div>
<div class="ab" style="left:365px;top:294px;width:1px;height:15px;background:#9aa0a6"></div>
<div class="ab" style="left:366px;top:294px;width:1px;height:15px;background:#fff"></div>
<div class="ab" style="left:465px;top:294px;width:1px;height:15px;background:#9aa0a6"></div>
<div class="ab" style="left:466px;top:294px;width:1px;height:15px;background:#fff"></div>
<div class="ab" style="left:565px;top:294px;width:1px;height:15px;background:#9aa0a6"></div>
<div class="ab" style="left:566px;top:294px;width:1px;height:15px;background:#fff"></div>
<div class="ab" style="left:665px;top:294px;width:1px;height:15px;background:#9aa0a6"></div>
<div class="ab" style="left:666px;top:294px;width:1px;height:15px;background:#fff"></div>
<div class="ab" style="left:765px;top:294px;width:1px;height:15px;background:#9aa0a6"></div>
<div class="ab" style="left:766px;top:294px;width:1px;height:15px;background:#fff"></div>
<div class="ab" style="left:865px;top:294px;width:1px;height:15px;background:#9aa0a6"></div>
<div class="ab" style="left:866px;top:294px;width:1px;height:15px;background:#fff"></div>
<div class="ab" style="left:965px;top:294px;width:1px;height:15px;background:#9aa0a6"></div>
<div class="ab" style="left:966px;top:294px;width:1px;height:15px;background:#fff"></div>
<svg class="ab" style="left:201px;top:312px" width="17" height="14"><rect x="1.6" y="1.6" width="11" height="11" fill="#fff" stroke="#000" stroke-width="1.3"/><path d="M4.2 6.5L7 10.2L14.3 1.2" stroke="#000" stroke-width="2.3" fill="none"/></svg>
<div class="t" style="left:221px;top:312px">(K) <span class="k">인디에프</span></div>
<div class="t" style="left:365px;top:312px;width:100px;text-align:center;color:#141414">014990</div>
<div class="t" style="left:465px;top:312px;width:95px;text-align:right;color:#c0282d">667</div>
<svg class="ab" style="left:568px;top:314px" width="10" height="8"><path d="M0 8L5 0L10 8Z" fill="#d80000"/></svg>
<div class="t" style="left:565px;top:312px;width:95px;text-align:right;color:#c0282d;white-space:pre;word-spacing:1px">28 ( 4.38)</div>
<div class="t" style="left:665px;top:312px;width:95px;text-align:right;color:#141414">511,534</div>
<div class="t" style="left:765px;top:312px;width:95px;text-align:right;color:#141414">639</div>
<div class="t" style="left:865px;top:312px;width:95px;text-align:right;color:#c0282d">690</div>
<svg class="ab" style="left:201px;top:329px" width="17" height="14"><rect x="1.6" y="1.6" width="11" height="11" fill="#fff" stroke="#000" stroke-width="1.3"/><path d="M4.2 6.5L7 10.2L14.3 1.2" stroke="#000" stroke-width="2.3" fill="none"/></svg>
<div class="t" style="left:221px;top:329px">(Q) <span class="k">성호전자</span></div>
<div class="t" style="left:365px;top:329px;width:100px;text-align:center;color:#141414">043260</div>
<div class="t" style="left:465px;top:329px;width:95px;text-align:right;color:#c0282d">1,636</div>
<svg class="ab" style="left:568px;top:331px" width="10" height="8"><path d="M0 8L5 0L10 8Z" fill="#d80000"/></svg>
<div class="t" style="left:565px;top:329px;width:95px;text-align:right;color:#c0282d;white-space:pre;word-spacing:1px">66 ( 4.20)</div>
<div class="t" style="left:665px;top:329px;width:95px;text-align:right;color:#141414">740,175</div>
<div class="t" style="left:765px;top:329px;width:95px;text-align:right;color:#c0282d">1,576</div>
<div class="t" style="left:865px;top:329px;width:95px;text-align:right;color:#c0282d">1,660</div>
<svg class="ab" style="left:201px;top:346px" width="17" height="14"><rect x="1.6" y="1.6" width="11" height="11" fill="#fff" stroke="#000" stroke-width="1.3"/><path d="M4.2 6.5L7 10.2L14.3 1.2" stroke="#000" stroke-width="2.3" fill="none"/></svg>
<div class="t" style="left:221px;top:346px">(Q) <span class="k">블리츠웨이스튜디오</span></div>
<div class="t" style="left:365px;top:346px;width:100px;text-align:center;color:#141414">369370</div>
<div class="t" style="left:465px;top:346px;width:95px;text-align:right;color:#c0282d">1,708</div>
<svg class="ab" style="left:568px;top:348px" width="10" height="8"><path d="M0 8L5 0L10 8Z" fill="#d80000"/></svg>
<div class="t" style="left:565px;top:346px;width:95px;text-align:right;color:#c0282d;white-space:pre;word-spacing:1px">67 ( 4.08)</div>
<div class="t" style="left:665px;top:346px;width:95px;text-align:right;color:#141414">3,012</div>
<div class="t" style="left:765px;top:346px;width:95px;text-align:right;color:#c0282d">1,652</div>
<div class="t" style="left:865px;top:346px;width:95px;text-align:right;color:#c0282d">1,750</div>
<svg class="ab" style="left:201px;top:363px" width="17" height="14"><rect x="1.6" y="1.6" width="11" height="11" fill="#fff" stroke="#000" stroke-width="1.3"/><path d="M4.2 6.5L7 10.2L14.3 1.2" stroke="#000" stroke-width="2.3" fill="none"/></svg>
<div class="t" style="left:221px;top:363px">(Q) <span class="k">아이비김영</span></div>
<div class="t" style="left:365px;top:363px;width:100px;text-align:center;color:#141414">339950</div>
<div class="t" style="left:465px;top:363px;width:95px;text-align:right;color:#c0282d">1,814</div>
<svg class="ab" style="left:568px;top:365px" width="10" height="8"><path d="M0 8L5 0L10 8Z" fill="#d80000"/></svg>
<div class="t" style="left:565px;top:363px;width:95px;text-align:right;color:#c0282d;white-space:pre;word-spacing:1px">28 ( 1.57)</div>
<div class="t" style="left:665px;top:363px;width:95px;text-align:right;color:#141414">62,105</div>
<div class="t" style="left:765px;top:363px;width:95px;text-align:right;color:#2020b0">1,780</div>
<div class="t" style="left:865px;top:363px;width:95px;text-align:right;color:#c0282d">1,814</div>
<svg class="ab" style="left:201px;top:380px" width="17" height="14"><rect x="1.6" y="1.6" width="11" height="11" fill="#fff" stroke="#000" stroke-width="1.3"/><path d="M4.2 6.5L7 10.2L14.3 1.2" stroke="#000" stroke-width="2.3" fill="none"/></svg>
<div class="t" style="left:221px;top:380px">(Q) <span class="k">티피씨글로벌</span></div>
<div class="t" style="left:365px;top:380px;width:100px;text-align:center;color:#141414">130740</div>
<div class="t" style="left:465px;top:380px;width:95px;text-align:right;color:#c0282d">2,090</div>
<svg class="ab" style="left:568px;top:382px" width="10" height="8"><path d="M0 8L5 0L10 8Z" fill="#d80000"/></svg>
<div class="t" style="left:565px;top:380px;width:95px;text-align:right;color:#c0282d;white-space:pre;word-spacing:1px">91 ( 4.55)</div>
<div class="t" style="left:665px;top:380px;width:95px;text-align:right;color:#141414">23,041</div>
<div class="t" style="left:765px;top:380px;width:95px;text-align:right;color:#141414">1,999</div>
<div class="t" style="left:865px;top:380px;width:95px;text-align:right;color:#c0282d">2,095</div>
<svg class="ab" style="left:201px;top:397px" width="17" height="14"><rect x="1.6" y="1.6" width="11" height="11" fill="#fff" stroke="#000" stroke-width="1.3"/><path d="M4.2 6.5L7 10.2L14.3 1.2" stroke="#000" stroke-width="2.3" fill="none"/></svg>
<div class="t" style="left:221px;top:397px">(Q) <span class="k">디지아이</span></div>
<div class="t" style="left:365px;top:397px;width:100px;text-align:center;color:#141414">043360</div>
<div class="t" style="left:465px;top:397px;width:95px;text-align:right;color:#c0282d">2,300</div>
<svg class="ab" style="left:568px;top:399px" width="10" height="8"><path d="M0 8L5 0L10 8Z" fill="#d80000"/></svg>
<div class="t" style="left:565px;top:397px;width:95px;text-align:right;color:#c0282d;white-space:pre;word-spacing:1px">80 ( 3.60)</div>
<div class="t" style="left:665px;top:397px;width:95px;text-align:right;color:#141414">16,686</div>
<div class="t" style="left:765px;top:397px;width:95px;text-align:right;color:#141414">2,220</div>
<div class="t" style="left:865px;top:397px;width:95px;text-align:right;color:#c0282d">2,305</div>
<svg class="ab" style="left:201px;top:414px" width="17" height="14"><rect x="1.6" y="1.6" width="11" height="11" fill="#fff" stroke="#000" stroke-width="1.3"/><path d="M4.2 6.5L7 10.2L14.3 1.2" stroke="#000" stroke-width="2.3" fill="none"/></svg>
<div class="t" style="left:221px;top:414px">(Q) <span class="k">이브이첨단소재</span></div>
<div class="t" style="left:365px;top:414px;width:100px;text-align:center;color:#141414">131400</div>
<div class="t" style="left:465px;top:414px;width:95px;text-align:right;color:#c0282d">2,510</div>
<svg class="ab" style="left:568px;top:416px" width="10" height="8"><path d="M0 8L5 0L10 8Z" fill="#d80000"/></svg>
<div class="t" style="left:565px;top:414px;width:95px;text-align:right;color:#c0282d;white-space:pre;word-spacing:1px">175 ( 7.49)</div>
<div class="t" style="left:665px;top:414px;width:95px;text-align:right;color:#141414">1,260,647</div>
<div class="t" style="left:765px;top:414px;width:95px;text-align:right;color:#141414">2,335</div>
<div class="t" style="left:865px;top:414px;width:95px;text-align:right;color:#c0282d">2,550</div>
<svg class="ab" style="left:201px;top:431px" width="17" height="14"><rect x="1.6" y="1.6" width="11" height="11" fill="#fff" stroke="#000" stroke-width="1.3"/><path d="M4.2 6.5L7 10.2L14.3 1.2" stroke="#000" stroke-width="2.3" fill="none"/></svg>
<div class="t" style="left:221px;top:431px">(K) <span class="k">한화생명</span></div>
<div class="t" style="left:365px;top:431px;width:100px;text-align:center;color:#141414">088350</div>
<div class="t" style="left:465px;top:431px;width:95px;text-align:right;color:#c0282d">2,955</div>
<svg class="ab" style="left:568px;top:433px" width="10" height="8"><path d="M0 8L5 0L10 8Z" fill="#d80000"/></svg>
<div class="t" style="left:565px;top:431px;width:95px;text-align:right;color:#c0282d;white-space:pre;word-spacing:1px">130 ( 4.60)</div>
<div class="t" style="left:665px;top:431px;width:95px;text-align:right;color:#141414">1,951,222</div>
<div class="t" style="left:765px;top:431px;width:95px;text-align:right;color:#c0282d">2,845</div>
<div class="t" style="left:865px;top:431px;width:95px;text-align:right;color:#c0282d">2,960</div>
<svg class="ab" style="left:201px;top:448px" width="17" height="14"><rect x="1.6" y="1.6" width="11" height="11" fill="#fff" stroke="#000" stroke-width="1.3"/><path d="M4.2 6.5L7 10.2L14.3 1.2" stroke="#000" stroke-width="2.3" fill="none"/></svg>
<div class="t" style="left:221px;top:448px">(Q) <span class="k">현대무벡스</span></div>
<div class="t" style="left:365px;top:448px;width:100px;text-align:center;color:#141414">319400</div>
<div class="t" style="left:465px;top:448px;width:95px;text-align:right;color:#c0282d">2,975</div>
<svg class="ab" style="left:568px;top:450px" width="10" height="8"><path d="M0 8L5 0L10 8Z" fill="#d80000"/></svg>
<div class="t" style="left:565px;top:448px;width:95px;text-align:right;color:#c0282d;white-space:pre;word-spacing:1px">100 ( 3.48)</div>
<div class="t" style="left:665px;top:448px;width:95px;text-align:right;color:#141414">4,934,176</div>
<div class="t" style="left:765px;top:448px;width:95px;text-align:right;color:#c0282d">2,880</div>
<div class="t" style="left:865px;top:448px;width:95px;text-align:right;color:#c0282d">3,300</div>
<svg class="ab" style="left:201px;top:465px" width="17" height="14"><rect x="1.6" y="1.6" width="11" height="11" fill="#fff" stroke="#000" stroke-width="1.3"/><path d="M4.2 6.5L7 10.2L14.3 1.2" stroke="#000" stroke-width="2.3" fill="none"/></svg>
<div class="t" style="left:221px;top:465px">(Q) <span class="k">피코그램</span></div>
<div class="t" style="left:365px;top:465px;width:100px;text-align:center;color:#141414">376180</div>
<div class="t" style="left:465px;top:465px;width:95px;text-align:right;color:#c0282d">3,165</div>
<svg class="ab" style="left:568px;top:467px" width="10" height="8"><path d="M0 8L5 0L10 8Z" fill="#d80000"/></svg>
<div class="t" style="left:565px;top:465px;width:95px;text-align:right;color:#c0282d;white-space:pre;word-spacing:1px">480 (17.88)</div>
<div class="t" style="left:665px;top:465px;width:95px;text-align:right;color:#141414">5,267,294</div>
<div class="t" style="left:765px;top:465px;width:95px;text-align:right;color:#141414">2,685</div>
<div class="t" style="left:865px;top:465px;width:95px;text-align:right;color:#c0282d">3,345</div>
<svg class="ab" style="left:201px;top:482px" width="17" height="14"><rect x="1.6" y="1.6" width="11" height="11" fill="#fff" stroke="#000" stroke-width="1.3"/><path d="M4.2 6.5L7 10.2L14.3 1.2" stroke="#000" stroke-width="2.3" fill="none"/></svg>
<div class="t" style="left:221px;top:482px">(Q) <span class="k">서플러스글로벌</span></div>
<div class="t" style="left:365px;top:482px;width:100px;text-align:center;color:#141414">140070</div>
<div class="t" style="left:465px;top:482px;width:95px;text-align:right;color:#c0282d">3,175</div>
<svg class="ab" style="left:568px;top:484px" width="10" height="8"><path d="M0 8L5 0L10 8Z" fill="#d80000"/></svg>
<div class="t" style="left:565px;top:482px;width:95px;text-align:right;color:#c0282d;white-space:pre;word-spacing:1px">235 ( 7.99)</div>
<div class="t" style="left:665px;top:482px;width:95px;text-align:right;color:#141414">2,382,258</div>
<div class="t" style="left:765px;top:482px;width:95px;text-align:right;color:#2020b0">2,915</div>
<div class="t" style="left:865px;top:482px;width:95px;text-align:right;color:#c0282d">3,350</div>
<svg class="ab" style="left:201px;top:499px" width="17" height="14"><rect x="1.6" y="1.6" width="11" height="11" fill="#fff" stroke="#000" stroke-width="1.3"/><path d="M4.2 6.5L7 10.2L14.3 1.2" stroke="#000" stroke-width="2.3" fill="none"/></svg>
<div class="t" style="left:221px;top:499px">(K) <span class="k">하이스틸</span></div>
<div class="t" style="left:365px;top:499px;width:100px;text-align:center;color:#141414">071090</div>
<div class="t" style="left:465px;top:499px;width:95px;text-align:right;color:#c0282d">3,445</div>
<svg class="ab" style="left:568px;top:501px" width="10" height="8"><path d="M0 8L5 0L10 8Z" fill="#d80000"/></svg>
<div class="t" style="left:565px;top:499px;width:95px;text-align:right;color:#c0282d;white-space:pre;word-spacing:1px">120 ( 3.61)</div>
<div class="t" style="left:665px;top:499px;width:95px;text-align:right;color:#141414">310,742</div>
<div class="t" style="left:765px;top:499px;width:95px;text-align:right;color:#2020b0">3,305</div>
<div class="t" style="left:865px;top:499px;width:95px;text-align:right;color:#c0282d">3,455</div>
<svg class="ab" style="left:201px;top:516px" width="17" height="14"><rect x="1.6" y="1.6" width="11" height="11" fill="#fff" stroke="#000" stroke-width="1.3"/><path d="M4.2 6.5L7 10.2L14.3 1.2" stroke="#000" stroke-width="2.3" fill="none"/></svg>
<div class="t" style="left:221px;top:516px">(Q) <span class="k">원익</span></div>
<div class="t" style="left:365px;top:516px;width:100px;text-align:center;color:#141414">032940</div>
<div class="t" style="left:465px;top:516px;width:95px;text-align:right;color:#c0282d">4,230</div>
<svg class="ab" style="left:568px;top:518px" width="10" height="8"><path d="M0 8L5 0L10 8Z" fill="#d80000"/></svg>
<div class="t" style="left:565px;top:516px;width:95px;text-align:right;color:#c0282d;white-space:pre;word-spacing:1px">205 ( 5.09)</div>
<div class="t" style="left:665px;top:516px;width:95px;text-align:right;color:#141414">76,775</div>
<div class="t" style="left:765px;top:516px;width:95px;text-align:right;color:#c0282d">4,035</div>
<div class="t" style="left:865px;top:516px;width:95px;text-align:right;color:#c0282d">4,260</div>
<svg class="ab" style="left:201px;top:533px" width="17" height="14"><rect x="1.6" y="1.6" width="11" height="11" fill="#fff" stroke="#000" stroke-width="1.3"/><path d="M4.2 6.5L7 10.2L14.3 1.2" stroke="#000" stroke-width="2.3" fill="none"/></svg>
<div class="t" style="left:221px;top:533px">(Q) <span class="k">나라엠앤디</span></div>
<div class="t" style="left:365px;top:533px;width:100px;text-align:center;color:#141414">051490</div>
<div class="t" style="left:465px;top:533px;width:95px;text-align:right;color:#c0282d">4,885</div>
<svg class="ab" style="left:568px;top:535px" width="10" height="8"><path d="M0 8L5 0L10 8Z" fill="#d80000"/></svg>
<div class="t" style="left:565px;top:533px;width:95px;text-align:right;color:#c0282d;white-space:pre;word-spacing:1px">495 (11.28)</div>
<div class="t" style="left:665px;top:533px;width:95px;text-align:right;color:#141414">4,474,677</div>
<div class="t" style="left:765px;top:533px;width:95px;text-align:right;color:#c0282d">4,460</div>
<div class="t" style="left:865px;top:533px;width:95px;text-align:right;color:#c0282d">5,420</div>
<svg class="ab" style="left:201px;top:550px" width="17" height="14"><rect x="1.6" y="1.6" width="11" height="11" fill="#fff" stroke="#000" stroke-width="1.3"/><path d="M4.2 6.5L7 10.2L14.3 1.2" stroke="#000" stroke-width="2.3" fill="none"/></svg>
<div class="t" style="left:221px;top:550px">(K) <span class="k">스카이라이프</span></div>
<div class="t" style="left:365px;top:550px;width:100px;text-align:center;color:#141414">053210</div>
<div class="t" style="left:465px;top:550px;width:95px;text-align:right;color:#c0282d">4,990</div>
<svg class="ab" style="left:568px;top:552px" width="10" height="8"><path d="M0 8L5 0L10 8Z" fill="#d80000"/></svg>
<div class="t" style="left:565px;top:550px;width:95px;text-align:right;color:#c0282d;white-space:pre;word-spacing:1px">75 ( 1.53)</div>
<div class="t" style="left:665px;top:550px;width:95px;text-align:right;color:#141414">19,851</div>
<div class="t" style="left:765px;top:550px;width:95px;text-align:right;color:#c0282d">4,930</div>
<div class="t" style="left:865px;top:550px;width:95px;text-align:right;color:#c0282d">5,010</div>
<svg class="ab" style="left:201px;top:567px" width="17" height="14"><rect x="1.6" y="1.6" width="11" height="11" fill="#fff" stroke="#000" stroke-width="1.3"/><path d="M4.2 6.5L7 10.2L14.3 1.2" stroke="#000" stroke-width="2.3" fill="none"/></svg>
<div class="t" style="left:221px;top:567px">(K) <span class="k">신대양제지</span></div>
<div class="t" style="left:365px;top:567px;width:100px;text-align:center;color:#141414">016590</div>
<div class="t" style="left:465px;top:567px;width:95px;text-align:right;color:#c0282d">5,650</div>
<svg class="ab" style="left:568px;top:569px" width="10" height="8"><path d="M0 8L5 0L10 8Z" fill="#d80000"/></svg>
<div class="t" style="left:565px;top:567px;width:95px;text-align:right;color:#c0282d;white-space:pre;word-spacing:1px">40 ( 0.71)</div>
<div class="t" style="left:665px;top:567px;width:95px;text-align:right;color:#141414">10,100</div>
<div class="t" style="left:765px;top:567px;width:95px;text-align:right;color:#141414">5,610</div>
<div class="t" style="left:865px;top:567px;width:95px;text-align:right;color:#c0282d">5,650</div>
<svg class="ab" style="left:201px;top:584px" width="17" height="14"><rect x="1.6" y="1.6" width="11" height="11" fill="#fff" stroke="#000" stroke-width="1.3"/><path d="M4.2 6.5L7 10.2L14.3 1.2" stroke="#000" stroke-width="2.3" fill="none"/></svg>
<div class="t" style="left:221px;top:584px">(Q) <span class="k">코리아에셋투자증권</span></div>
<div class="t" style="left:365px;top:584px;width:100px;text-align:center;color:#141414">190650</div>
<div class="t" style="left:465px;top:584px;width:95px;text-align:right;color:#c0282d">5,880</div>
<svg class="ab" style="left:568px;top:586px" width="10" height="8"><path d="M0 8L5 0L10 8Z" fill="#d80000"/></svg>
<div class="t" style="left:565px;top:584px;width:95px;text-align:right;color:#c0282d;white-space:pre;word-spacing:1px">120 ( 2.08)</div>
<div class="t" style="left:665px;top:584px;width:95px;text-align:right;color:#141414">4,114</div>
<div class="t" style="left:765px;top:584px;width:95px;text-align:right;color:#141414">5,760</div>
<div class="t" style="left:865px;top:584px;width:95px;text-align:right;color:#c0282d">5,930</div>
<svg class="ab" style="left:201px;top:601px" width="17" height="14"><rect x="1.6" y="1.6" width="11" height="11" fill="#fff" stroke="#000" stroke-width="1.3"/><path d="M4.2 6.5L7 10.2L14.3 1.2" stroke="#000" stroke-width="2.3" fill="none"/></svg>
<div class="t" style="left:221px;top:601px">(K) <span class="k">후성</span></div>
<div class="t" style="left:365px;top:601px;width:100px;text-align:center;color:#141414">093370</div>
<div class="t" style="left:465px;top:601px;width:95px;text-align:right;color:#c0282d">6,720</div>
<svg class="ab" style="left:568px;top:603px" width="10" height="8"><path d="M0 8L5 0L10 8Z" fill="#d80000"/></svg>
<div class="t" style="left:565px;top:601px;width:95px;text-align:right;color:#c0282d;white-space:pre;word-spacing:1px">280 ( 4.35)</div>
<div class="t" style="left:665px;top:601px;width:95px;text-align:right;color:#141414">414,865</div>
<div class="t" style="left:765px;top:601px;width:95px;text-align:right;color:#141414">6,440</div>
<div class="t" style="left:865px;top:601px;width:95px;text-align:right;color:#c0282d">6,860</div>
<svg class="ab" style="left:201px;top:618px" width="17" height="14"><rect x="1.6" y="1.6" width="11" height="11" fill="#fff" stroke="#000" stroke-width="1.3"/><path d="M4.2 6.5L7 10.2L14.3 1.2" stroke="#000" stroke-width="2.3" fill="none"/></svg>
<div class="t" style="left:221px;top:618px">(Q) <span class="k">티에스아이</span></div>
<div class="t" style="left:365px;top:618px;width:100px;text-align:center;color:#141414">277880</div>
<div class="t" style="left:465px;top:618px;width:95px;text-align:right;color:#c0282d">6,870</div>
<svg class="ab" style="left:568px;top:620px" width="10" height="8"><path d="M0 8L5 0L10 8Z" fill="#d80000"/></svg>
<div class="t" style="left:565px;top:618px;width:95px;text-align:right;color:#c0282d;white-space:pre;word-spacing:1px">250 ( 3.78)</div>
<div class="t" style="left:665px;top:618px;width:95px;text-align:right;color:#141414">33,924</div>
<div class="t" style="left:765px;top:618px;width:95px;text-align:right;color:#2020b0">6,540</div>
<div class="t" style="left:865px;top:618px;width:95px;text-align:right;color:#c0282d">6,960</div>
<svg class="ab" style="left:201px;top:635px" width="17" height="14"><rect x="1.6" y="1.6" width="11" height="11" fill="#fff" stroke="#000" stroke-width="1.3"/><path d="M4.2 6.5L7 10.2L14.3 1.2" stroke="#000" stroke-width="2.3" fill="none"/></svg>
<div class="t" style="left:221px;top:635px">(Q) <span class="k">소프트센우</span></div>
<div class="t" style="left:365px;top:635px;width:100px;text-align:center;color:#141414">032685</div>
<div class="t" style="left:465px;top:635px;width:95px;text-align:right;color:#c0282d">8,000</div>
<svg class="ab" style="left:568px;top:637px" width="10" height="8"><path d="M0 8L5 0L10 8Z" fill="#d80000"/></svg>
<div class="t" style="left:565px;top:635px;width:95px;text-align:right;color:#c0282d;white-space:pre;word-spacing:1px">130 ( 1.65)</div>
<div class="t" style="left:665px;top:635px;width:95px;text-align:right;color:#141414">165</div>
<div class="t" style="left:765px;top:635px;width:95px;text-align:right;color:#141414">7,870</div>
<div class="t" style="left:865px;top:635px;width:95px;text-align:right;color:#c0282d">8,000</div>
<svg class="ab" style="left:201px;top:652px" width="17" height="14"><rect x="1.6" y="1.6" width="11" height="11" fill="#fff" stroke="#000" stroke-width="1.3"/><path d="M4.2 6.5L7 10.2L14.3 1.2" stroke="#000" stroke-width="2.3" fill="none"/></svg>
<div class="t" style="left:221px;top:652px">(Q) <span class="k">삼지전자</span></div>
<div class="t" style="left:365px;top:652px;width:100px;text-align:center;color:#141414">037460</div>
<div class="t" style="left:465px;top:652px;width:95px;text-align:right;color:#c0282d">8,720</div>
<svg class="ab" style="left:568px;top:654px" width="10" height="8"><path d="M0 8L5 0L10 8Z" fill="#d80000"/></svg>
<div class="t" style="left:565px;top:652px;width:95px;text-align:right;color:#c0282d;white-space:pre;word-spacing:1px">100 ( 1.16)</div>
<div class="t" style="left:665px;top:652px;width:95px;text-align:right;color:#141414">31,688</div>
<div class="t" style="left:765px;top:652px;width:95px;text-align:right;color:#c0282d">8,630</div>
<div class="t" style="left:865px;top:652px;width:95px;text-align:right;color:#c0282d">8,720</div>
<svg class="ab" style="left:201px;top:669px" width="17" height="14"><rect x="1.6" y="1.6" width="11" height="11" fill="#fff" stroke="#000" stroke-width="1.3"/><path d="M4.2 6.5L7 10.2L14.3 1.2" stroke="#000" stroke-width="2.3" fill="none"/></svg>
<div class="t" style="left:221px;top:669px">(Q) <span class="k">매커스</span></div>
<div class="t" style="left:365px;top:669px;width:100px;text-align:center;color:#141414">093520</div>
<div class="t" style="left:465px;top:669px;width:95px;text-align:right;color:#c0282d">9,700</div>
<svg class="ab" style="left:568px;top:671px" width="10" height="8"><path d="M0 8L5 0L10 8Z" fill="#d80000"/></svg>
<div class="t" style="left:565px;top:669px;width:95px;text-align:right;color:#c0282d;white-space:pre;word-spacing:1px">400 ( 4.30)</div>
<div class="t" style="left:665px;top:669px;width:95px;text-align:right;color:#141414">1,433,243</div>
<div class="t" style="left:765px;top:669px;width:95px;text-align:right;color:#141414">9,300</div>
<div class="t" style="left:865px;top:669px;width:95px;text-align:right;color:#c0282d">10,600</div>
<svg class="ab" style="left:201px;top:686px" width="17" height="14"><rect x="1.6" y="1.6" width="11" height="11" fill="#fff" stroke="#000" stroke-width="1.3"/><path d="M4.2 6.5L7 10.2L14.3 1.2" stroke="#000" stroke-width="2.3" fill="none"/></svg>
<div class="t" style="left:221px;top:686px">(K) <span class="k">케이카</span></div>
<div class="t" style="left:365px;top:686px;width:100px;text-align:center;color:#141414">381970</div>
<div class="t" style="left:465px;top:686px;width:95px;text-align:right;color:#c0282d">13,480</div>
<svg class="ab" style="left:568px;top:688px" width="10" height="8"><path d="M0 8L5 0L10 8Z" fill="#d80000"/></svg>
<div class="t" style="left:565px;top:686px;width:95px;text-align:right;color:#c0282d;white-space:pre;word-spacing:1px">490 ( 3.77)</div>
<div class="t" style="left:665px;top:686px;width:95px;text-align:right;color:#141414">99,916</div>
<div class="t" style="left:765px;top:686px;width:95px;text-align:right;color:#c0282d">13,090</div>
<div class="t" style="left:865px;top:686px;width:95px;text-align:right;color:#c0282d">13,490</div>
<svg class="ab" style="left:201px;top:703px" width="17" height="14"><rect x="1.6" y="1.6" width="11" height="11" fill="#fff" stroke="#000" stroke-width="1.3"/><path d="M4.2 6.5L7 10.2L14.3 1.2" stroke="#000" stroke-width="2.3" fill="none"/></svg>
<div class="t" style="left:221px;top:703px">(Q) <span class="k">이스트소프트</span></div>
<div class="t" style="left:365px;top:703px;width:100px;text-align:center;color:#141414">047560</div>
<div class="t" style="left:465px;top:703px;width:95px;text-align:right;color:#c0282d">14,750</div>
<svg class="ab" style="left:568px;top:705px" width="10" height="8"><path d="M0 8L5 0L10 8Z" fill="#d80000"/></svg>
<div class="t" style="left:565px;top:703px;width:95px;text-align:right;color:#c0282d;white-space:pre;word-spacing:1px">830 ( 5.96)</div>
<div class="t" style="left:665px;top:703px;width:95px;text-align:right;color:#141414">211,908</div>
<div class="t" style="left:765px;top:703px;width:95px;text-align:right;color:#c0282d">14,060</div>
<div class="t" style="left:865px;top:703px;width:95px;text-align:right;color:#c0282d">14,760</div>
<svg class="ab" style="left:202px;top:297px" width="14" height="12"><rect x="1.6" y="1.6" width="7.8" height="7.8" fill="#fff" stroke="#000" stroke-width="1.3"/><path d="M3.5 5L5.8 7.3L11 2" stroke="#000" stroke-width="1" fill="none"/></svg>
<div class="t" style="left:216px;top:295px;width:150px;text-align:center;color:#444"><span class="k">종목명</span>(35)</div>
<div class="t" style="left:366px;top:295px;width:100px;text-align:center;color:#444"><span class="k">종목코드</span></div>
<div class="t" style="left:473px;top:295px;width:100px;text-align:center;color:#444"><span class="k">현재가</span></div>
<div class="t" style="left:566px;top:295px;width:100px;text-align:center;color:#444"><span class="k">전일대비</span>(%)</div>
<div class="t" style="left:666px;top:295px;width:100px;text-align:center;color:#444"><span class="k">거래량</span></div>
<div class="t" style="left:766px;top:295px;width:100px;text-align:center;color:#444"><span class="k">시가</span></div>
<div class="t" style="left:866px;top:295px;width:100px;text-align:center;color:#444"><span class="k">고가</span></div>
<div class="ab" style="left:469px;top:297px;width:10px;height:11px;background:#cfcfcf"></div>
<svg class="ab" style="left:469px;top:297px" width="9" height="11"><path d="M4.5 1L9 5.5H6.5V10h-4V5.5H0Z" fill="#e00000"/></svg>
<div class="ab" style="left:1003px;top:294px;width:15px;height:424px;background:repeating-conic-gradient(#f6f6f6 0 25%,#ffffff 0 50%) 0 0/2px 2px"></div>
<div class="ab" style="left:1003px;top:294px;width:16px;height:17px;background:#f0f0f0;border-top:1px solid #fafafa;border-left:1px solid #fafafa;border-right:2px solid #696969;border-bottom:2px solid #696969"></div>
<svg class="ab" style="left:1006px;top:299px" width="9" height="5"><path d="M0 5L4.5 0L9 5Z" fill="#000"/></svg>
<div class="ab" style="left:1003px;top:311px;width:16px;height:256px;background:#f0f0f0;border-top:1px solid #fafafa;border-left:1px solid #fafafa;border-right:2px solid #696969;border-bottom:2px solid #696969"></div>
<div class="ab" style="left:1003px;top:701px;width:16px;height:16px;background:#f0f0f0;border-top:1px solid #fafafa;border-left:1px solid #fafafa;border-right:2px solid #696969;border-bottom:2px solid #696969"></div>
<svg class="ab" style="left:1006px;top:706px" width="9" height="5"><path d="M0 0L4.5 5L9 0Z" fill="#000"/></svg>
<div class="ab" style="left:199px;top:718px;width:804px;height:14px;background:repeating-conic-gradient(#f6f6f6 0 25%,#ffffff 0 50%) 0 0/2px 2px"></div>
<div class="ab" style="left:199px;top:718px;width:16px;height:15px;background:#f0f0f0;border-top:1px solid #fafafa;border-left:1px solid #fafafa;border-right:2px solid #696969;border-bottom:2px solid #696969"></div>
<svg class="ab" style="left:204px;top:721px" width="5" height="9"><path d="M5 0L0 4.5L5 9Z" fill="#000"/></svg>
<div class="ab" style="left:215px;top:718px;width:773px;height:15px;background:#f0f0f0;border-top:1px solid #fafafa;border-left:1px solid #fafafa;border-right:2px solid #696969;border-bottom:2px solid #696969"></div>
<div class="ab" style="left:987px;top:718px;width:16px;height:15px;background:#f0f0f0;border-top:1px solid #fafafa;border-left:1px solid #fafafa;border-right:2px solid #696969;border-bottom:2px solid #696969"></div>
<svg class="ab" style="left:992px;top:721px" width="5" height="9"><path d="M0 0L5 4.5L0 9Z" fill="#000"/></svg>
<div class="ab" style="left:1003px;top:717px;width:16px;height:15px;background:#e6f0fa"></div>
<div class="ab" style="left:198px;top:731px;width:822px;height:2px;background:#6a6a6a"></div>
<div class="ab" style="left:198px;top:733px;width:822px;height:1px;background:#a6a6a6"></div>
<div class="ab" style="left:0;top:734px;width:1020px;height:2px;background:#6e6e6e"></div>
<div class="ab" style="left:0;top:736px;width:1020px;height:1px;background:#f8f8f8"></div>
<div class="ab" style="left:0;top:737px;width:1020px;height:7px;background:#d7d3ce"></div>
</body></html>
